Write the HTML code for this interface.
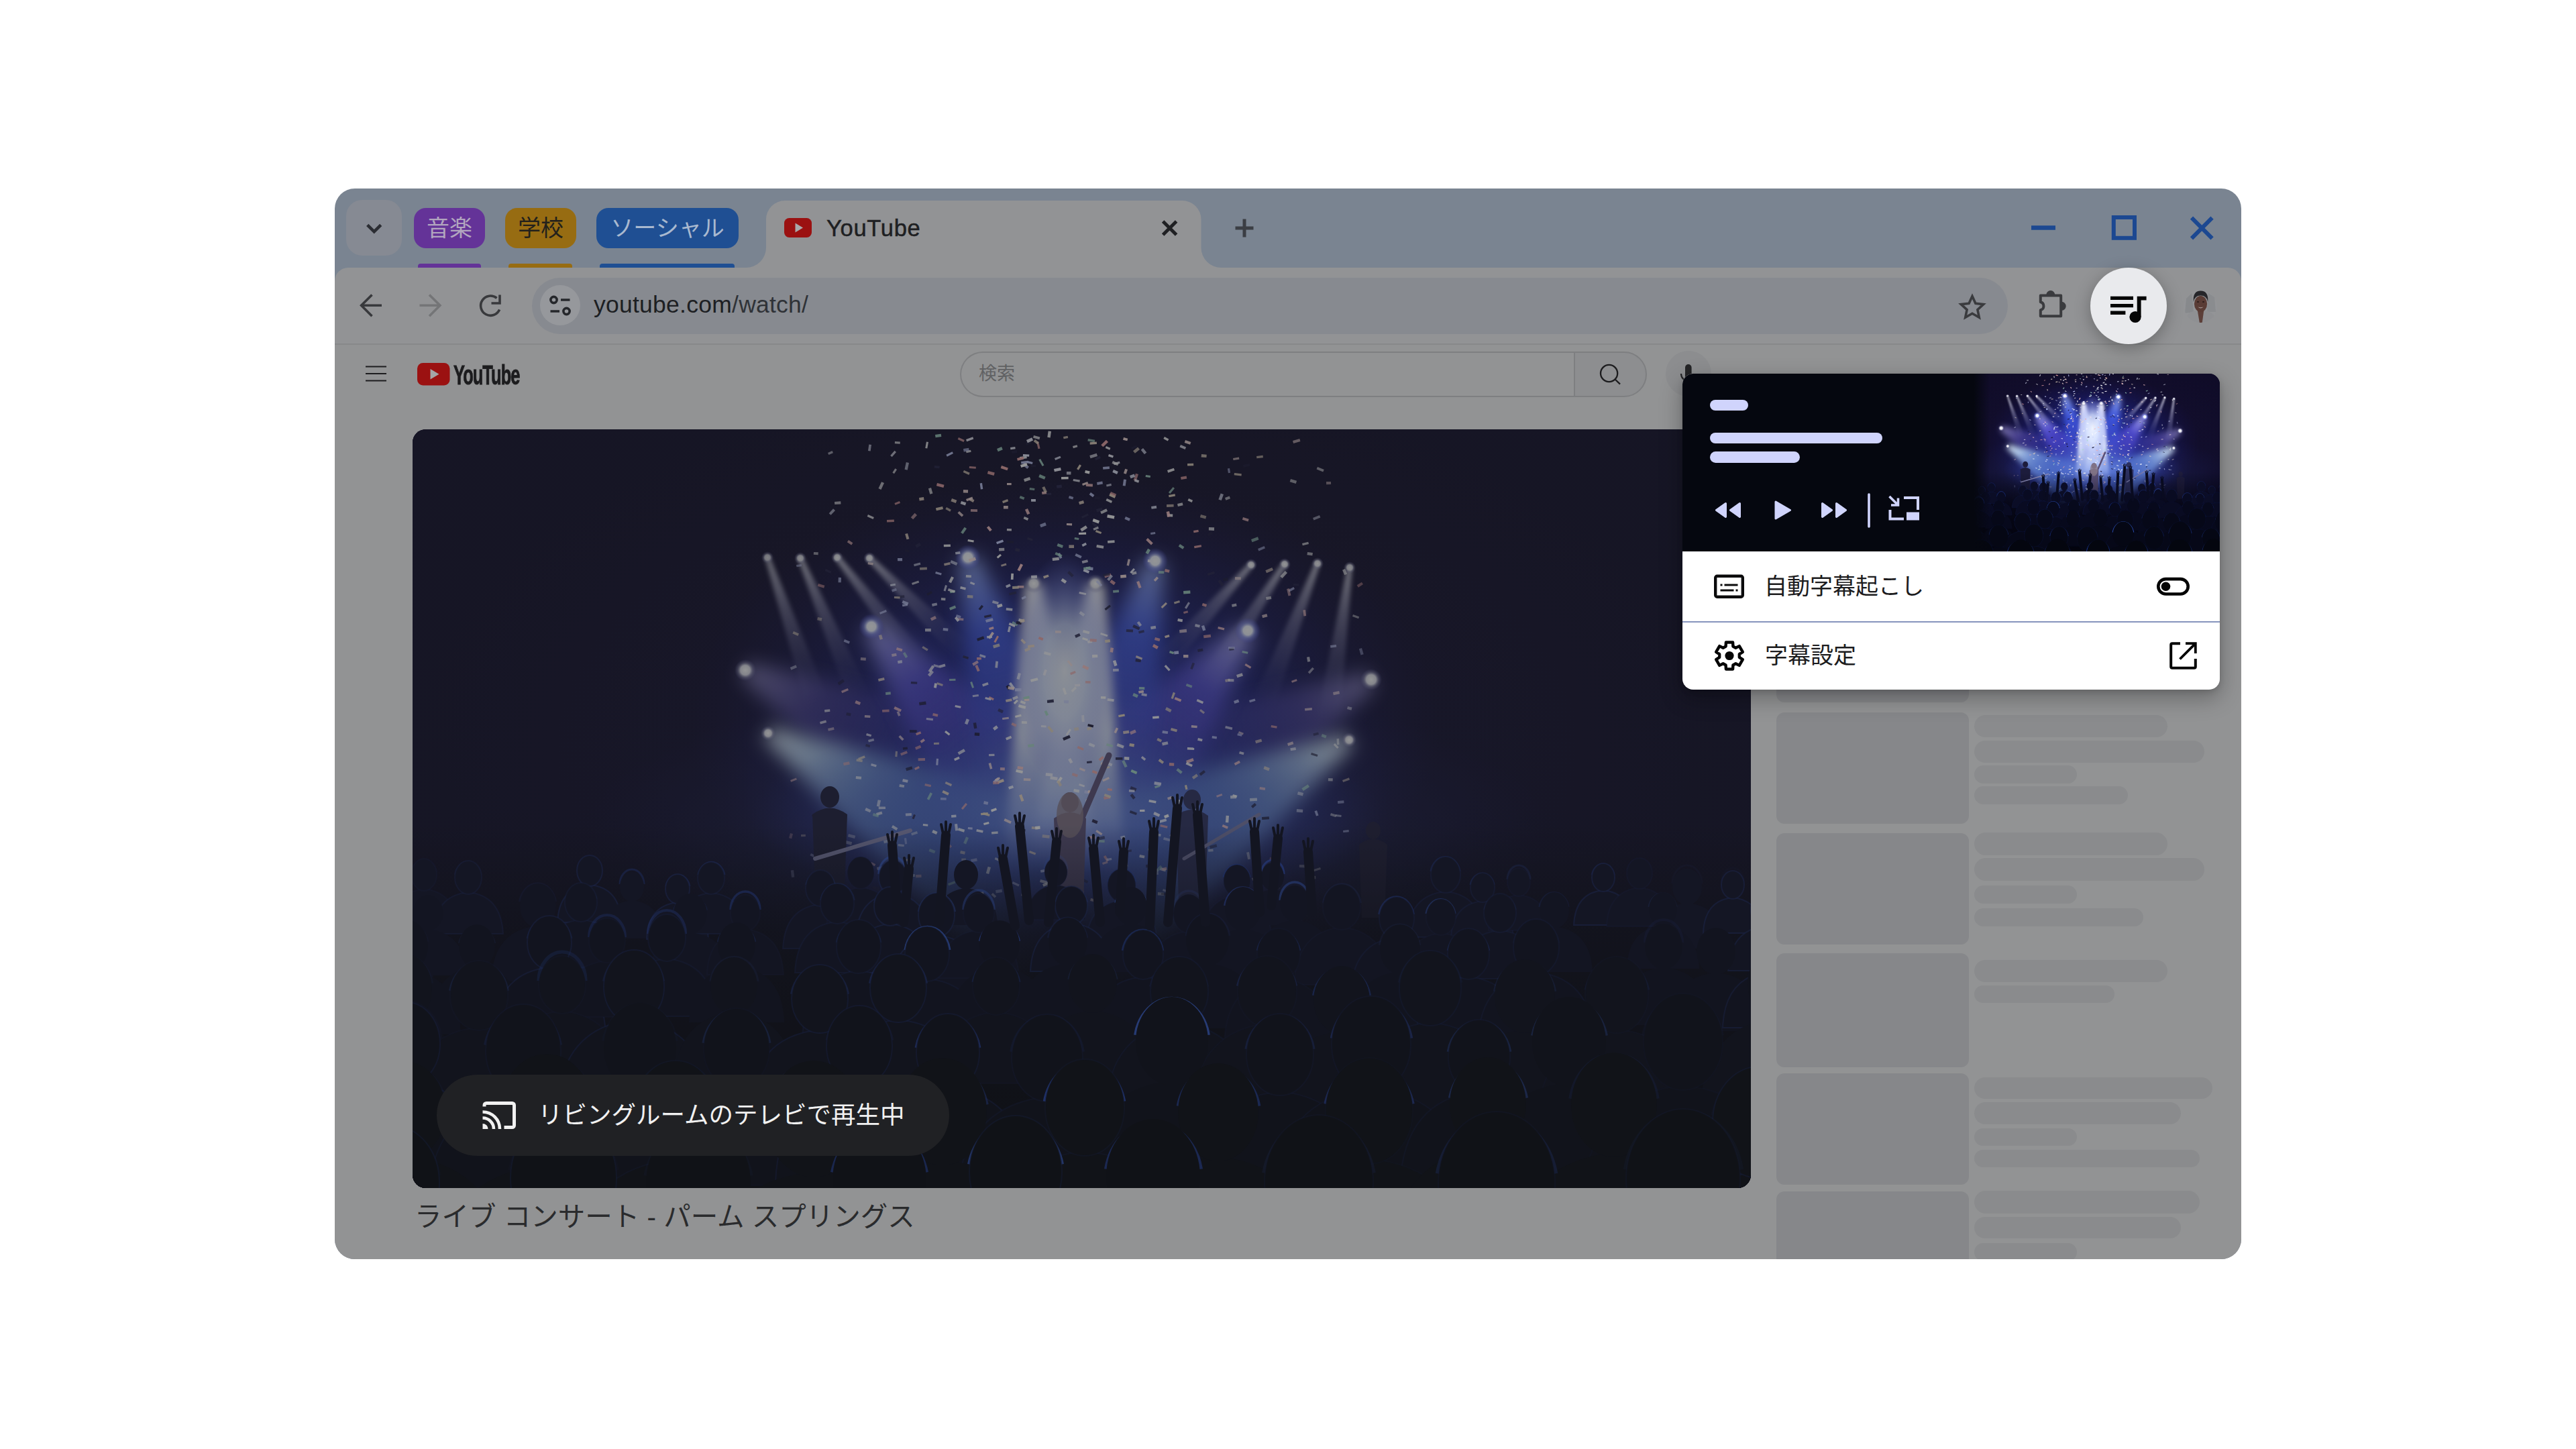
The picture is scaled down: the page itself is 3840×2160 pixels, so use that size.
<!DOCTYPE html>
<html lang="ja">
<head>
<meta charset="utf-8">
<title>YouTube</title>
<style>
*{box-sizing:border-box;margin:0;padding:0}
html,body{width:3840px;height:2160px;overflow:hidden;background:#fff}
body{position:relative;font-family:"Liberation Sans","Noto Sans CJK JP",sans-serif;color:#1f2023}
.abs{position:absolute}
#win{position:absolute;left:499px;top:281px;width:2842px;height:1596px;border-radius:30px;background:#7a8491;overflow:hidden}
/* coordinates inside #win are global minus (499,281) */
#win .g{position:absolute}
.chip{position:absolute;top:29px;height:60px;border-radius:18px;font-size:34px;line-height:60px;text-align:center;white-space:nowrap;font-family:"Liberation Sans","Noto Sans CJK JP",sans-serif}
.uline{position:absolute;top:112px;height:8px;border-radius:4px 4px 0 0}
#toolbar{position:absolute;left:0;top:118px;width:2842px;height:115px;background:#929395;border-radius:20px 20px 0 0;border-bottom:2px solid #87888a}
#content{position:absolute;left:0;top:233px;width:2842px;height:1363px;background:#929394}
#omni{position:absolute;left:294px;top:133px;width:2200px;height:84px;border-radius:42px;background:#878a90}
#siteinfo{position:absolute;left:306px;top:144px;width:60px;height:60px;border-radius:30px;background:#96989c}
#url{position:absolute;left:386px;top:130.5px;height:84px;line-height:84px;font-size:35.5px;letter-spacing:0.25px;color:#1d1f23;white-space:nowrap}
#url span{color:#2f3237}
#tabtitle{position:absolute;left:733px;top:24px;height:70px;line-height:70px;font-size:34.5px;letter-spacing:0.7px;-webkit-text-stroke:0.5px #1e1f22;color:#1e1f22;white-space:nowrap}
.sk{position:absolute;background:#8a8b8d;border-radius:17px}
.th{position:absolute;background:#86878a;border-radius:12px;left:2149px;width:287px}
#video{position:absolute;left:116px;top:359px;width:1995px;height:1131px;border-radius:20px;overflow:hidden;background:#13121d}
#video svg{position:absolute;left:0;top:0}
#scrim{position:absolute;left:0;top:0;width:100%;height:100%;background:rgba(32,33,36,0.48)}
#castpill{position:absolute;left:36px;top:962px;width:764px;height:121px;border-radius:61px;background:#202124}
#casttext{position:absolute;left:151px;top:1px;height:121px;line-height:119px;font-size:36.5px;color:#f1f1f1;white-space:nowrap;font-family:"Liberation Sans","Noto Sans CJK JP",sans-serif}
#vtitle{position:absolute;left:119px;top:1503px;height:60px;line-height:60px;font-size:40.5px;color:#2a2b2d;white-space:nowrap}
#ytsearch{position:absolute;left:932px;top:243px;width:916px;height:68px;border:2px solid #7e7f81;border-right:none;border-radius:34px 0 0 34px;background:#929394}
#ytsearchbtn{position:absolute;left:1847px;top:243px;width:109px;height:68px;border:2px solid #7e7f81;border-radius:0 34px 34px 0;background:#8d8e90}
#ytph{position:absolute;left:960px;top:243px;height:68px;line-height:66px;font-size:27px;color:#606163;white-space:nowrap}
#mic{position:absolute;left:1984px;top:242px;width:68px;height:68px;border-radius:34px;background:#8c8d8f}
#ytword{position:absolute;left:176.5px;top:255.5px;-webkit-text-stroke:1px #1c1c1e;height:44px;line-height:44px;font-size:41px;font-weight:bold;color:#1c1c1e;white-space:nowrap;transform-origin:0 50%;transform:scaleX(0.62);letter-spacing:-1.5px}
/* popup */
#mediabtn{position:absolute;left:3116px;top:399px;width:114px;height:114px;border-radius:57px;background:#e9eaed;box-shadow:0 6px 24px rgba(0,0,0,0.28)}
#popup{position:absolute;left:2508px;top:557px;width:801px;height:471px;border-radius:16px;background:#fff;overflow:hidden}
#popshadow{position:absolute;left:2508px;top:557px;width:801px;height:471px;border-radius:16px;box-shadow:0 12px 32px 2px rgba(0,0,0,0.27),0 3px 8px rgba(0,0,0,0.12)}
#pdark{position:absolute;left:0;top:0;width:801px;height:265px;background:#05070f}
.bar{position:absolute;background:#d0d4fc;border-radius:9px;left:41px}
.ptext{position:absolute;font-size:34px;color:#1c1c1e;white-space:nowrap;height:60px;line-height:60px;font-family:"Liberation Sans","Noto Sans CJK JP",sans-serif}
#pdiv{position:absolute;left:0;top:369px;width:801px;height:2px;background:#8694bd}
</style>
</head>
<body>
<svg width="0" height="0" style="position:absolute"><defs>
<linearGradient id="cbg" x1="0" y1="0" x2="0" y2="1"><stop offset="0" stop-color="#120d2b"/><stop offset="0.5" stop-color="#110e2c"/><stop offset="0.75" stop-color="#0a0b22"/><stop offset="1" stop-color="#04061a"/></linearGradient>
<radialGradient id="cglow" cx="0.5" cy="0.5" r="0.5" ><stop offset="0" stop-color="#2838c8" stop-opacity="0.85"/><stop offset="0.5" stop-color="#222ca8" stop-opacity="0.55"/><stop offset="0.8" stop-color="#1c1e7c" stop-opacity="0.22"/><stop offset="1" stop-color="#1a1660" stop-opacity="0"/></radialGradient>
<radialGradient id="chaze" cx="0.5" cy="0.5" r="0.5" ><stop offset="0" stop-color="#6c8ce0" stop-opacity="0.8"/><stop offset="0.5" stop-color="#4460c8" stop-opacity="0.5"/><stop offset="1" stop-color="#2c34a0" stop-opacity="0"/></radialGradient>
<radialGradient id="cwhite" cx="0.5" cy="0.5" r="0.5" ><stop offset="0" stop-color="#f4f8ff" stop-opacity="1"/><stop offset="0.4" stop-color="#d4e0ff" stop-opacity="0.85"/><stop offset="0.75" stop-color="#8f9cf0" stop-opacity="0.4"/><stop offset="1" stop-color="#6a70e0" stop-opacity="0"/></radialGradient>
<radialGradient id="clight" cx="0.5" cy="0.5" r="0.5" ><stop offset="0" stop-color="#ffffff" stop-opacity="1"/><stop offset="0.35" stop-color="#f0f4ff" stop-opacity="1"/><stop offset="0.6" stop-color="#9aa6ff" stop-opacity="0.55"/><stop offset="1" stop-color="#5a60ff" stop-opacity="0"/></radialGradient>
<radialGradient id="clightw" cx="0.5" cy="0.5" r="0.5" ><stop offset="0" stop-color="#ffffff" stop-opacity="1"/><stop offset="0.45" stop-color="#e8e8f0" stop-opacity="0.95"/><stop offset="0.7" stop-color="#b0b0d0" stop-opacity="0.4"/><stop offset="1" stop-color="#8080c0" stop-opacity="0"/></radialGradient>
<linearGradient id="bw" x1="0" y1="0" x2="0" y2="1"><stop offset="0" stop-color="#f4f4ff" stop-opacity="0.8"/><stop offset="0.35" stop-color="#d0d0f0" stop-opacity="0.45"/><stop offset="0.75" stop-color="#a8a8e0" stop-opacity="0.14"/><stop offset="1" stop-color="#a0a0e0" stop-opacity="0"/></linearGradient>
<linearGradient id="bb" x1="0" y1="0" x2="0" y2="1"><stop offset="0" stop-color="#a0b8ff" stop-opacity="1"/><stop offset="0.25" stop-color="#4460f0" stop-opacity="0.85"/><stop offset="0.6" stop-color="#2c3cd0" stop-opacity="0.5"/><stop offset="1" stop-color="#2028a8" stop-opacity="0"/></linearGradient>
<linearGradient id="bm" x1="0" y1="0" x2="0" y2="1"><stop offset="0" stop-color="#b0b0ff" stop-opacity="0.95"/><stop offset="0.25" stop-color="#6058e8" stop-opacity="0.75"/><stop offset="0.6" stop-color="#4a3cc8" stop-opacity="0.4"/><stop offset="1" stop-color="#3a2ca0" stop-opacity="0"/></linearGradient>
<linearGradient id="bc" x1="0" y1="0" x2="0" y2="1"><stop offset="0" stop-color="#e8f6ff" stop-opacity="1"/><stop offset="0.3" stop-color="#96c6f6" stop-opacity="0.78"/><stop offset="0.65" stop-color="#5a90e0" stop-opacity="0.42"/><stop offset="1" stop-color="#4670d0" stop-opacity="0"/></linearGradient>
<linearGradient id="bcw" x1="0" y1="0" x2="0" y2="1"><stop offset="0" stop-color="#ffffff" stop-opacity="1"/><stop offset="0.5" stop-color="#eaf2ff" stop-opacity="0.95"/><stop offset="0.8" stop-color="#b0c4f8" stop-opacity="0.5"/><stop offset="1" stop-color="#7080e0" stop-opacity="0"/></linearGradient>
<linearGradient id="bp" x1="0" y1="0" x2="0" y2="1"><stop offset="0" stop-color="#c0b8f8" stop-opacity="0.7"/><stop offset="0.3" stop-color="#7868d8" stop-opacity="0.45"/><stop offset="0.7" stop-color="#5040b0" stop-opacity="0.2"/><stop offset="1" stop-color="#4030a0" stop-opacity="0"/></linearGradient>
<linearGradient id="cfade" x1="0" y1="0" x2="0" y2="1"><stop offset="0" stop-color="#03040e" stop-opacity="0"/><stop offset="0.3" stop-color="#03040e" stop-opacity="0.6"/><stop offset="0.7" stop-color="#02030c" stop-opacity="0.9"/><stop offset="1" stop-color="#02030a" stop-opacity="0.96"/></linearGradient>
<radialGradient id="cvig" cx="0.5" cy="0.5" r="0.5" gradientTransform="translate(-0.01 -0.08)"><stop offset="0.6" stop-color="#0e0b26" stop-opacity="0"/><stop offset="1" stop-color="#0e0b26" stop-opacity="0.8"/></radialGradient>
<filter id="b3" x="-30%" y="-10%" width="160%" height="120%"><feGaussianBlur stdDeviation="3"/></filter>
<filter id="b8" x="-30%" y="-10%" width="160%" height="120%"><feGaussianBlur stdDeviation="8"/></filter>
<filter id="b14" x="-30%" y="-10%" width="160%" height="120%"><feGaussianBlur stdDeviation="14"/></filter>
<g id="concert">
<rect width="1995" height="1131" fill="url(#cbg)"/>
<ellipse cx="972" cy="440" rx="560" ry="370" fill="url(#cglow)"/>
<g transform="translate(496 359) rotate(-62)" opacity="0.9"><polygon points="-12.0,0 12.0,0 115.0,380 -115.0,380" fill="url(#bp)" filter="url(#b14)"/></g>
<g transform="translate(1429 373) rotate(62)" opacity="0.9"><polygon points="-12.0,0 12.0,0 115.0,380 -115.0,380" fill="url(#bp)" filter="url(#b14)"/></g>
<g transform="translate(684 294) rotate(-39)" opacity="0.95"><polygon points="-13.0,0 13.0,0 125.0,430 -125.0,430" fill="url(#bm)" filter="url(#b14)"/></g>
<g transform="translate(1245 300) rotate(39)" opacity="0.95"><polygon points="-13.0,0 13.0,0 125.0,430 -125.0,430" fill="url(#bm)" filter="url(#b14)"/></g>
<g transform="translate(828 191) rotate(-16)" opacity="0.95"><polygon points="-13.0,0 13.0,0 105.0,440 -105.0,440" fill="url(#bb)" filter="url(#b14)"/></g>
<g transform="translate(1107 196) rotate(14)" opacity="0.95"><polygon points="-13.0,0 13.0,0 105.0,440 -105.0,440" fill="url(#bb)" filter="url(#b14)"/></g>
<g transform="translate(530 453) rotate(-60)" opacity="1"><polygon points="-10.0,0 10.0,0 150.0,520 -150.0,520" fill="url(#bc)" filter="url(#b14)"/></g>
<g transform="translate(1396 463) rotate(60)" opacity="1"><polygon points="-10.0,0 10.0,0 150.0,520 -150.0,520" fill="url(#bc)" filter="url(#b14)"/></g>
<ellipse cx="975" cy="600" rx="720" ry="230" fill="url(#chaze)" opacity="0.32"/>
<ellipse cx="975" cy="575" rx="470" ry="150" fill="url(#chaze)"/>
<g transform="translate(926 230) rotate(-4)" opacity="1"><polygon points="-13.0,0 13.0,0 75.0,430 -75.0,430" fill="url(#bcw)" filter="url(#b8)"/></g>
<g transform="translate(1018 230) rotate(4)" opacity="1"><polygon points="-13.0,0 13.0,0 75.0,430 -75.0,430" fill="url(#bcw)" filter="url(#b8)"/></g>
<ellipse cx="972" cy="360" rx="78" ry="175" fill="url(#cwhite)" opacity="1"/><ellipse cx="972" cy="460" rx="210" ry="210" fill="url(#cwhite)" opacity="0.14"/>
<g transform="translate(529 191) rotate(-19)" opacity="0.9"><polygon points="-4.0,0 4.0,0 17.0,230 -17.0,230" fill="url(#bw)" filter="url(#b3)"/></g>
<g transform="translate(578 192) rotate(-23)" opacity="0.9"><polygon points="-4.0,0 4.0,0 17.0,225 -17.0,225" fill="url(#bw)" filter="url(#b3)"/></g>
<g transform="translate(633 191) rotate(-38)" opacity="0.9"><polygon points="-4.0,0 4.0,0 17.0,220 -17.0,220" fill="url(#bw)" filter="url(#b3)"/></g>
<g transform="translate(681 192) rotate(-45)" opacity="0.9"><polygon points="-4.0,0 4.0,0 17.0,200 -17.0,200" fill="url(#bw)" filter="url(#b3)"/></g>
<g transform="translate(1397 206) rotate(8)" opacity="0.9"><polygon points="-4.0,0 4.0,0 17.0,230 -17.0,230" fill="url(#bw)" filter="url(#b3)"/></g>
<g transform="translate(1349 200) rotate(21)" opacity="0.9"><polygon points="-4.0,0 4.0,0 17.0,225 -17.0,225" fill="url(#bw)" filter="url(#b3)"/></g>
<g transform="translate(1300 201) rotate(33)" opacity="0.9"><polygon points="-4.0,0 4.0,0 17.0,220 -17.0,220" fill="url(#bw)" filter="url(#b3)"/></g>
<g transform="translate(1250 202) rotate(42)" opacity="0.9"><polygon points="-4.0,0 4.0,0 17.0,200 -17.0,200" fill="url(#bw)" filter="url(#b3)"/></g>
<circle cx="529" cy="191" r="9" fill="url(#clightw)"/>
<circle cx="578" cy="192" r="9" fill="url(#clightw)"/>
<circle cx="633" cy="191" r="9" fill="url(#clightw)"/>
<circle cx="681" cy="192" r="9" fill="url(#clightw)"/>
<circle cx="1250" cy="202" r="9" fill="url(#clightw)"/>
<circle cx="1300" cy="201" r="9" fill="url(#clightw)"/>
<circle cx="1349" cy="200" r="9" fill="url(#clightw)"/>
<circle cx="1397" cy="206" r="9" fill="url(#clightw)"/>
<circle cx="828" cy="191" r="19" fill="url(#clight)"/>
<circle cx="1107" cy="196" r="19" fill="url(#clight)"/>
<circle cx="684" cy="294" r="19" fill="url(#clight)"/>
<circle cx="1245" cy="300" r="19" fill="url(#clight)"/>
<circle cx="926" cy="230" r="14" fill="url(#clightw)"/>
<circle cx="1018" cy="230" r="14" fill="url(#clightw)"/>
<circle cx="496" cy="359" r="16" fill="url(#clightw)"/>
<circle cx="1429" cy="373" r="16" fill="url(#clightw)"/>
<circle cx="530" cy="453" r="11" fill="url(#clightw)"/>
<circle cx="1396" cy="463" r="11" fill="url(#clightw)"/>
<rect width="1995" height="1131" fill="url(#cvig)"/>
<g><rect x="785" y="352" width="8.8" height="3.9" fill="#f4f4ff" opacity="0.74" transform="rotate(-16 785 352)"/><rect x="630" y="121" width="9.4" height="4.0" fill="#e8ecff" opacity="0.64" transform="rotate(133 630 121)"/><rect x="828" y="593" width="6.8" height="3.1" fill="#c8d0ff" opacity="0.82" transform="rotate(5 828 593)"/><rect x="987" y="161" width="6.5" height="3.1" fill="#a8dcc8" opacity="0.78" transform="rotate(8 987 161)"/><rect x="1198" y="546" width="8.8" height="3.0" fill="#ffc8c8" opacity="0.61" transform="rotate(-20 1198 546)"/><rect x="933" y="18" width="10.7" height="3.1" fill="#f0a8a8" opacity="0.76" transform="rotate(76 933 18)"/><rect x="807" y="491" width="8.0" height="3.5" fill="#ffffff" opacity="0.84" transform="rotate(-24 807 491)"/><rect x="814" y="12" width="9.6" height="3.3" fill="#f0a8a8" opacity="0.75" transform="rotate(24 814 12)"/><rect x="1026" y="303" width="11.0" height="3.0" fill="#ffffff" opacity="0.76" transform="rotate(18 1026 303)"/><rect x="646" y="697" width="6.7" height="3.2" fill="#ffc8c8" opacity="0.32" transform="rotate(-25 646 697)"/><rect x="849" y="80" width="9.1" height="3.4" fill="#c8d0ff" opacity="0.91" transform="rotate(82 849 80)"/><rect x="796" y="116" width="7.9" height="3.4" fill="#e8d8c0" opacity="0.69" transform="rotate(29 796 116)"/><rect x="1251" y="669" width="10.5" height="4.0" fill="#ffffff" opacity="0.45" transform="rotate(-20 1251 669)"/><rect x="568" y="301" width="8.7" height="3.8" fill="#e8d8c0" opacity="0.58" transform="rotate(24 568 301)"/><rect x="1230" y="453" width="6.8" height="3.3" fill="#c8d0ff" opacity="0.63" transform="rotate(12 1230 453)"/><rect x="936" y="44" width="10.9" height="3.1" fill="#a8dcc8" opacity="0.86" transform="rotate(60 936 44)"/><rect x="1337" y="666" width="9.2" height="4.5" fill="#ffffff" opacity="0.35" transform="rotate(-1 1337 666)"/><rect x="1093" y="68" width="7.1" height="3.1" fill="#a8dcc8" opacity="0.88" transform="rotate(8 1093 68)"/><rect x="1070" y="568" width="10.6" height="3.6" fill="#1a1838" opacity="0.70" transform="rotate(20 1070 568)"/><rect x="1310" y="375" width="8.2" height="3.0" fill="#ffc8c8" opacity="0.67" transform="rotate(-20 1310 375)"/><rect x="1000" y="299" width="9.8" height="3.9" fill="#ffffff" opacity="0.79" transform="rotate(15 1000 299)"/><rect x="1362" y="78" width="7.0" height="4.2" fill="#ffe4e0" opacity="0.50" transform="rotate(-1 1362 78)"/><rect x="1059" y="450" width="8.8" height="4.2" fill="#f0dcc8" opacity="0.82" transform="rotate(-8 1059 450)"/><rect x="747" y="201" width="9.9" height="3.3" fill="#e8ecff" opacity="0.63" transform="rotate(-14 747 201)"/><rect x="696" y="273" width="10.5" height="3.1" fill="#c8d0ff" opacity="0.67" transform="rotate(-22 696 273)"/><rect x="1115" y="653" width="8.8" height="4.1" fill="#f4f4ff" opacity="0.61" transform="rotate(17 1115 653)"/><rect x="807" y="221" width="9.2" height="4.1" fill="#ffffff" opacity="0.82" transform="rotate(117 807 221)"/><rect x="1107" y="310" width="7.7" height="4.2" fill="#f0a8a8" opacity="0.82" transform="rotate(15 1107 310)"/><rect x="1375" y="468" width="8.2" height="3.1" fill="#ffffff" opacity="0.60" transform="rotate(46 1375 468)"/><rect x="1137" y="399" width="10.0" height="3.9" fill="#ffc8c8" opacity="0.88" transform="rotate(22 1137 399)"/><rect x="1014" y="508" width="7.5" height="3.7" fill="#f0a8a8" opacity="0.97" transform="rotate(20 1014 508)"/><rect x="779" y="8" width="8.8" height="4.3" fill="#a8dcc8" opacity="0.85" transform="rotate(-8 779 8)"/><rect x="847" y="572" width="10.7" height="3.2" fill="#e8d8c0" opacity="0.95" transform="rotate(-5 847 572)"/><rect x="936" y="657" width="6.6" height="3.8" fill="#c8d0ff" opacity="0.74" transform="rotate(-8 936 657)"/><rect x="1260" y="178" width="10.4" height="3.7" fill="#c8d0ff" opacity="0.58" transform="rotate(-23 1260 178)"/><rect x="898" y="386" width="9.6" height="4.5" fill="#c8d0ff" opacity="0.86" transform="rotate(-0 898 386)"/><rect x="605" y="230" width="9.8" height="4.0" fill="#f0a8a8" opacity="0.56" transform="rotate(17 605 230)"/><rect x="1131" y="602" width="10.3" height="4.5" fill="#f4f4ff" opacity="0.53" transform="rotate(36 1131 602)"/><rect x="873" y="445" width="6.6" height="4.6" fill="#f4f4ff" opacity="0.84" transform="rotate(144 873 445)"/><rect x="1270" y="502" width="8.4" height="4.5" fill="#f0dcc8" opacity="0.64" transform="rotate(21 1270 502)"/><rect x="1113" y="583" width="10.6" height="3.8" fill="#e8ecff" opacity="0.86" transform="rotate(-15 1113 583)"/><rect x="1146" y="686" width="6.6" height="3.5" fill="#a8dcc8" opacity="0.53" transform="rotate(-13 1146 686)"/><rect x="1009" y="606" width="9.3" height="4.1" fill="#ffc8c8" opacity="0.72" transform="rotate(4 1009 606)"/><rect x="860" y="398" width="7.5" height="3.3" fill="#f0a8a8" opacity="0.92" transform="rotate(25 860 398)"/><rect x="869" y="638" width="10.7" height="3.3" fill="#e8ecff" opacity="0.63" transform="rotate(25 869 638)"/><rect x="1122" y="208" width="6.9" height="4.3" fill="#f0a8a8" opacity="0.84" transform="rotate(14 1122 208)"/><rect x="1037" y="19" width="10.6" height="4.5" fill="#f0a8a8" opacity="0.95" transform="rotate(136 1037 19)"/><rect x="1376" y="574" width="8.7" height="3.0" fill="#e8ecff" opacity="0.49" transform="rotate(6 1376 574)"/><rect x="1017" y="100" width="7.8" height="4.1" fill="#1a1838" opacity="0.73" transform="rotate(4 1017 100)"/><rect x="1082" y="301" width="8.4" height="3.6" fill="#26244a" opacity="0.74" transform="rotate(-14 1082 301)"/><rect x="841" y="312" width="10.6" height="4.0" fill="#1a1838" opacity="0.91" transform="rotate(-20 841 312)"/><rect x="1188" y="621" width="10.6" height="4.5" fill="#1a1838" opacity="0.52" transform="rotate(-15 1188 621)"/><rect x="1208" y="222" width="7.2" height="4.5" fill="#1a1838" opacity="0.69" transform="rotate(-9 1208 222)"/><rect x="1164" y="151" width="7.4" height="3.3" fill="#f0a8a8" opacity="0.86" transform="rotate(-10 1164 151)"/><rect x="917" y="47" width="7.8" height="3.3" fill="#c8d0ff" opacity="0.89" transform="rotate(14 917 47)"/><rect x="1030" y="548" width="9.3" height="4.2" fill="#f0a8a8" opacity="0.81" transform="rotate(-12 1030 548)"/><rect x="968" y="87" width="7.6" height="4.4" fill="#26244a" opacity="1.00" transform="rotate(174 968 87)"/><rect x="1009" y="467" width="9.2" height="4.2" fill="#e8ecff" opacity="0.96" transform="rotate(22 1009 467)"/><rect x="884" y="403" width="9.2" height="3.7" fill="#f0dcc8" opacity="0.86" transform="rotate(-11 884 403)"/><rect x="907" y="364" width="9.5" height="4.2" fill="#e8ecff" opacity="0.82" transform="rotate(105 907 364)"/><rect x="912" y="50" width="9.1" height="4.2" fill="#c8d0ff" opacity="0.78" transform="rotate(40 912 50)"/><rect x="1223" y="544" width="6.7" height="3.2" fill="#ffffff" opacity="0.75" transform="rotate(16 1223 544)"/><rect x="907" y="48" width="10.4" height="3.6" fill="#c8d0ff" opacity="0.88" transform="rotate(-7 907 48)"/><rect x="1035" y="468" width="9.6" height="3.6" fill="#a8dcc8" opacity="0.74" transform="rotate(16 1035 468)"/><rect x="777" y="362" width="8.8" height="4.4" fill="#ffffff" opacity="0.67" transform="rotate(131 777 362)"/><rect x="969" y="222" width="7.6" height="4.5" fill="#ffffff" opacity="0.89" transform="rotate(35 969 222)"/><rect x="970" y="11" width="6.7" height="3.4" fill="#e8d8c0" opacity="0.77" transform="rotate(-11 970 11)"/><rect x="1044" y="688" width="8.7" height="3.6" fill="#1a1838" opacity="0.53" transform="rotate(-8 1044 688)"/><rect x="630" y="579" width="7.5" height="3.7" fill="#26244a" opacity="0.72" transform="rotate(66 630 579)"/><rect x="731" y="255" width="9.0" height="4.2" fill="#c8d0ff" opacity="0.80" transform="rotate(21 731 255)"/><rect x="1145" y="71" width="8.7" height="4.1" fill="#f0a8a8" opacity="0.80" transform="rotate(-10 1145 71)"/><rect x="1141" y="505" width="8.7" height="4.2" fill="#a8dcc8" opacity="0.73" transform="rotate(39 1141 505)"/><rect x="832" y="641" width="9.2" height="4.4" fill="#c8d0ff" opacity="0.51" transform="rotate(-11 832 641)"/><rect x="1179" y="307" width="10.7" height="4.4" fill="#f0a8a8" opacity="0.71" transform="rotate(-7 1179 307)"/><rect x="1064" y="298" width="10.1" height="3.9" fill="#26244a" opacity="0.78" transform="rotate(3 1064 298)"/><rect x="1145" y="23" width="8.8" height="3.9" fill="#f4f4ff" opacity="0.79" transform="rotate(23 1145 23)"/><rect x="801" y="241" width="7.7" height="3.2" fill="#a8dcc8" opacity="0.86" transform="rotate(-9 801 241)"/><rect x="917" y="322" width="9.7" height="3.8" fill="#f0dcc8" opacity="0.94" transform="rotate(-8 917 322)"/><rect x="1125" y="260" width="10.1" height="3.1" fill="#f0dcc8" opacity="0.89" transform="rotate(136 1125 260)"/><rect x="1217" y="576" width="10.3" height="4.4" fill="#ffffff" opacity="0.78" transform="rotate(94 1217 576)"/><rect x="865" y="322" width="9.8" height="4.6" fill="#e8d8c0" opacity="0.77" transform="rotate(-17 865 322)"/><rect x="1054" y="681" width="6.8" height="3.5" fill="#ffffff" opacity="0.66" transform="rotate(-19 1054 681)"/><rect x="719" y="18" width="7.9" height="3.3" fill="#ffffff" opacity="0.70" transform="rotate(4 719 18)"/><rect x="1019" y="336" width="10.5" height="3.6" fill="#c8d0ff" opacity="0.96" transform="rotate(113 1019 336)"/><rect x="1340" y="482" width="10.0" height="3.1" fill="#1a1838" opacity="0.65" transform="rotate(18 1340 482)"/><rect x="1119" y="685" width="10.0" height="3.1" fill="#c8d0ff" opacity="0.60" transform="rotate(20 1119 685)"/><rect x="1052" y="446" width="7.9" height="3.4" fill="#ffe4e0" opacity="0.85" transform="rotate(115 1052 446)"/><rect x="1045" y="50" width="9.1" height="3.3" fill="#f4f4ff" opacity="0.81" transform="rotate(-15 1045 50)"/><rect x="876" y="504" width="6.9" height="4.2" fill="#ffc8c8" opacity="0.75" transform="rotate(2 876 504)"/><rect x="1027" y="496" width="6.7" height="3.7" fill="#ffe4e0" opacity="0.82" transform="rotate(22 1027 496)"/><rect x="719" y="413" width="11.0" height="4.1" fill="#ffc8c8" opacity="0.74" transform="rotate(25 719 413)"/><rect x="1002" y="538" width="8.5" height="4.4" fill="#c8d0ff" opacity="0.93" transform="rotate(11 1002 538)"/><rect x="829" y="609" width="10.3" height="4.2" fill="#a8dcc8" opacity="0.51" transform="rotate(113 829 609)"/><rect x="738" y="263" width="7.7" height="3.3" fill="#c8d0ff" opacity="0.77" transform="rotate(170 738 263)"/><rect x="1159" y="259" width="10.2" height="3.1" fill="#e8ecff" opacity="0.67" transform="rotate(122 1159 259)"/><rect x="1121" y="308" width="6.9" height="3.4" fill="#f0dcc8" opacity="0.91" transform="rotate(-17 1121 308)"/><rect x="722" y="325" width="8.8" height="4.0" fill="#ffc8c8" opacity="0.73" transform="rotate(16 722 325)"/><rect x="795" y="525" width="10.0" height="3.4" fill="#f0dcc8" opacity="0.72" transform="rotate(24 795 525)"/><rect x="846" y="335" width="9.0" height="3.3" fill="#e8ecff" opacity="0.75" transform="rotate(18 846 335)"/><rect x="920" y="401" width="9.3" height="3.8" fill="#a8dcc8" opacity="0.95" transform="rotate(168 920 401)"/><rect x="1096" y="162" width="10.8" height="4.0" fill="#ffc8c8" opacity="0.88" transform="rotate(44 1096 162)"/><rect x="1144" y="258" width="8.6" height="3.2" fill="#e8d8c0" opacity="0.79" transform="rotate(163 1144 258)"/><rect x="874" y="416" width="7.7" height="4.5" fill="#26244a" opacity="0.69" transform="rotate(25 874 416)"/><rect x="684" y="498" width="8.1" height="3.3" fill="#e8ecff" opacity="0.73" transform="rotate(16 684 498)"/><rect x="1354" y="656" width="11.0" height="3.2" fill="#ffffff" opacity="0.34" transform="rotate(163 1354 656)"/><rect x="1125" y="549" width="6.6" height="3.8" fill="#ffe4e0" opacity="0.72" transform="rotate(-19 1125 549)"/><rect x="1232" y="657" width="6.7" height="4.3" fill="#ffffff" opacity="0.37" transform="rotate(14 1232 657)"/><rect x="1331" y="269" width="9.0" height="3.7" fill="#ffc8c8" opacity="0.66" transform="rotate(83 1331 269)"/><rect x="755" y="102" width="7.0" height="4.5" fill="#f0dcc8" opacity="0.83" transform="rotate(-8 755 102)"/><rect x="817" y="234" width="8.2" height="3.5" fill="#f4f4ff" opacity="0.88" transform="rotate(14 817 234)"/><rect x="840" y="195" width="10.4" height="4.6" fill="#ffe4e0" opacity="0.86" transform="rotate(164 840 195)"/><rect x="724" y="618" width="9.0" height="3.3" fill="#f4f4ff" opacity="0.45" transform="rotate(7 724 618)"/><rect x="1124" y="112" width="10.5" height="3.9" fill="#f0dcc8" opacity="0.70" transform="rotate(-2 1124 112)"/><rect x="714" y="335" width="7.1" height="4.1" fill="#ffe4e0" opacity="0.65" transform="rotate(-10 714 335)"/><rect x="1036" y="122" width="10.0" height="4.2" fill="#ffffff" opacity="0.76" transform="rotate(155 1036 122)"/><rect x="776" y="597" width="7.3" height="4.4" fill="#ffffff" opacity="0.79" transform="rotate(25 776 597)"/><rect x="1149" y="241" width="10.2" height="4.5" fill="#a8dcc8" opacity="0.89" transform="rotate(-4 1149 241)"/><rect x="827" y="559" width="10.4" height="3.2" fill="#f0a8a8" opacity="0.74" transform="rotate(130 827 559)"/><rect x="1031" y="218" width="10.1" height="3.8" fill="#f0a8a8" opacity="0.77" transform="rotate(-19 1031 218)"/><rect x="881" y="114" width="6.8" height="4.5" fill="#ffe4e0" opacity="0.86" transform="rotate(1 881 114)"/><rect x="761" y="323" width="9.1" height="3.3" fill="#e8d8c0" opacity="0.61" transform="rotate(32 761 323)"/><rect x="1318" y="566" width="9.3" height="4.5" fill="#e8ecff" opacity="0.51" transform="rotate(4 1318 566)"/><rect x="825" y="643" width="6.6" height="3.5" fill="#e8d8c0" opacity="0.48" transform="rotate(177 825 643)"/><rect x="1258" y="560" width="7.2" height="4.0" fill="#1a1838" opacity="0.72" transform="rotate(139 1258 560)"/><rect x="616" y="208" width="9.2" height="3.4" fill="#26244a" opacity="0.68" transform="rotate(24 616 208)"/><rect x="865" y="255" width="9.2" height="4.0" fill="#f4f4ff" opacity="0.72" transform="rotate(15 865 255)"/><rect x="826" y="148" width="9.7" height="4.0" fill="#a8dcc8" opacity="0.80" transform="rotate(125 826 148)"/><rect x="780" y="212" width="9.1" height="3.1" fill="#c8d0ff" opacity="0.80" transform="rotate(16 780 212)"/><rect x="995" y="593" width="8.3" height="3.6" fill="#1a1838" opacity="0.93" transform="rotate(24 995 593)"/><rect x="865" y="691" width="7.2" height="3.7" fill="#e8ecff" opacity="0.50" transform="rotate(43 865 691)"/><rect x="1098" y="682" width="9.6" height="4.1" fill="#e8d8c0" opacity="0.63" transform="rotate(24 1098 682)"/><rect x="1105" y="320" width="7.9" height="4.5" fill="#f0a8a8" opacity="0.95" transform="rotate(29 1105 320)"/><rect x="1071" y="532" width="9.1" height="4.5" fill="#26244a" opacity="0.76" transform="rotate(21 1071 532)"/><rect x="1180" y="292" width="7.6" height="4.3" fill="#c8d0ff" opacity="0.81" transform="rotate(72 1180 292)"/><rect x="1044" y="357" width="8.7" height="4.0" fill="#f4f4ff" opacity="0.71" transform="rotate(-1 1044 357)"/><rect x="1226" y="220" width="8.8" height="4.2" fill="#ffe4e0" opacity="0.60" transform="rotate(1 1226 220)"/><rect x="906" y="53" width="9.8" height="4.2" fill="#ffffff" opacity="1.00" transform="rotate(-18 906 53)"/><rect x="1100" y="294" width="7.7" height="4.4" fill="#ffffff" opacity="0.72" transform="rotate(-10 1100 294)"/><rect x="1083" y="384" width="8.3" height="3.8" fill="#a8dcc8" opacity="0.82" transform="rotate(1 1083 384)"/><rect x="1075" y="291" width="10.5" height="4.3" fill="#26244a" opacity="0.80" transform="rotate(25 1075 291)"/><rect x="821" y="90" width="7.1" height="4.4" fill="#ffe4e0" opacity="0.84" transform="rotate(2 821 90)"/><rect x="1125" y="61" width="10.3" height="3.9" fill="#ffffff" opacity="0.87" transform="rotate(-19 1125 61)"/><rect x="1001" y="208" width="8.7" height="3.8" fill="#e8ecff" opacity="0.98" transform="rotate(22 1001 208)"/><rect x="886" y="166" width="10.0" height="3.6" fill="#1a1838" opacity="0.75" transform="rotate(1 886 166)"/><rect x="879" y="430" width="9.7" height="3.0" fill="#ffe4e0" opacity="0.71" transform="rotate(-7 879 430)"/><rect x="694" y="372" width="9.1" height="3.8" fill="#f0dcc8" opacity="0.77" transform="rotate(-12 694 372)"/><rect x="945" y="419" width="7.3" height="3.8" fill="#a8dcc8" opacity="0.98" transform="rotate(65 945 419)"/><rect x="1379" y="554" width="9.3" height="4.0" fill="#c8d0ff" opacity="0.53" transform="rotate(-4 1379 554)"/><rect x="1128" y="643" width="8.8" height="3.5" fill="#ffe4e0" opacity="0.48" transform="rotate(-7 1128 643)"/><rect x="1005" y="495" width="7.6" height="3.0" fill="#26244a" opacity="0.90" transform="rotate(-5 1005 495)"/><rect x="755" y="407" width="10.2" height="4.6" fill="#1a1838" opacity="0.79" transform="rotate(-8 755 407)"/><rect x="735" y="505" width="9.6" height="4.5" fill="#1a1838" opacity="0.73" transform="rotate(-17 735 505)"/><rect x="895" y="286" width="8.9" height="3.4" fill="#a8dcc8" opacity="0.74" transform="rotate(32 895 286)"/><rect x="1218" y="58" width="6.8" height="3.2" fill="#c8d0ff" opacity="0.59" transform="rotate(81 1218 58)"/><rect x="727" y="456" width="8.1" height="3.6" fill="#ffe4e0" opacity="0.67" transform="rotate(46 727 456)"/><rect x="1128" y="497" width="7.3" height="4.4" fill="#f0a8a8" opacity="0.85" transform="rotate(3 1128 497)"/><rect x="1192" y="457" width="7.1" height="3.6" fill="#c8d0ff" opacity="0.75" transform="rotate(8 1192 457)"/><rect x="1284" y="681" width="8.4" height="4.0" fill="#e8ecff" opacity="0.41" transform="rotate(-5 1284 681)"/><rect x="1157" y="103" width="6.7" height="3.5" fill="#ffffff" opacity="0.85" transform="rotate(25 1157 103)"/><rect x="1023" y="608" width="8.5" height="4.4" fill="#1a1838" opacity="0.55" transform="rotate(-14 1023 608)"/><rect x="1052" y="426" width="9.5" height="3.3" fill="#e8d8c0" opacity="0.98" transform="rotate(-11 1052 426)"/><rect x="877" y="202" width="8.0" height="3.0" fill="#f0dcc8" opacity="0.76" transform="rotate(-18 877 202)"/><rect x="980" y="363" width="8.1" height="3.4" fill="#f0a8a8" opacity="0.72" transform="rotate(-22 980 363)"/><rect x="1036" y="166" width="10.4" height="3.8" fill="#ffffff" opacity="0.87" transform="rotate(-4 1036 166)"/><rect x="824" y="480" width="10.7" height="4.4" fill="#ffffff" opacity="0.70" transform="rotate(150 824 480)"/><rect x="891" y="27" width="7.3" height="3.2" fill="#f4f4ff" opacity="0.85" transform="rotate(-7 891 27)"/><rect x="1060" y="12" width="6.5" height="3.8" fill="#ffe4e0" opacity="0.94" transform="rotate(15 1060 12)"/><rect x="1098" y="552" width="10.8" height="3.6" fill="#ffffff" opacity="0.84" transform="rotate(10 1098 552)"/><rect x="965" y="184" width="8.2" height="3.6" fill="#c8d0ff" opacity="0.81" transform="rotate(66 965 184)"/><rect x="1112" y="222" width="6.9" height="3.5" fill="#ffe4e0" opacity="0.85" transform="rotate(134 1112 222)"/><rect x="886" y="148" width="7.0" height="3.2" fill="#ffffff" opacity="0.82" transform="rotate(2 886 148)"/><rect x="870" y="168" width="10.5" height="3.5" fill="#c8d0ff" opacity="0.98" transform="rotate(-20 870 168)"/><rect x="734" y="179" width="7.3" height="3.4" fill="#1a1838" opacity="0.67" transform="rotate(9 734 179)"/><rect x="1236" y="693" width="7.2" height="4.0" fill="#f0dcc8" opacity="0.49" transform="rotate(38 1236 693)"/><rect x="736" y="609" width="9.1" height="3.2" fill="#c8d0ff" opacity="0.44" transform="rotate(82 736 609)"/><rect x="791" y="296" width="7.5" height="4.0" fill="#c8d0ff" opacity="0.75" transform="rotate(6 791 296)"/><rect x="752" y="128" width="8.6" height="4.6" fill="#ffc8c8" opacity="0.61" transform="rotate(133 752 128)"/><rect x="984" y="680" width="7.0" height="3.3" fill="#1a1838" opacity="0.58" transform="rotate(21 984 680)"/><rect x="572" y="202" width="7.7" height="3.3" fill="#c8d0ff" opacity="0.50" transform="rotate(-8 572 202)"/><rect x="825" y="15" width="10.8" height="3.4" fill="#f4f4ff" opacity="0.88" transform="rotate(-20 825 15)"/><rect x="1120" y="608" width="10.0" height="3.9" fill="#e8ecff" opacity="0.46" transform="rotate(15 1120 608)"/><rect x="806" y="36" width="10.3" height="3.2" fill="#c8d0ff" opacity="0.89" transform="rotate(153 806 36)"/><rect x="1225" y="65" width="10.9" height="3.3" fill="#e8d8c0" opacity="0.74" transform="rotate(6 1225 65)"/><rect x="1170" y="328" width="7.9" height="4.0" fill="#1a1838" opacity="0.65" transform="rotate(-11 1170 328)"/><rect x="995" y="504" width="8.6" height="3.2" fill="#ffe4e0" opacity="0.76" transform="rotate(22 995 504)"/><rect x="791" y="697" width="8.1" height="3.5" fill="#f0dcc8" opacity="0.57" transform="rotate(-18 791 697)"/><rect x="644" y="313" width="8.6" height="3.8" fill="#c8d0ff" opacity="0.64" transform="rotate(22 644 313)"/><rect x="1083" y="226" width="10.3" height="4.1" fill="#ffc8c8" opacity="0.86" transform="rotate(70 1083 226)"/><rect x="841" y="340" width="6.8" height="3.7" fill="#f0a8a8" opacity="0.87" transform="rotate(-3 841 340)"/><rect x="981" y="490" width="7.1" height="4.4" fill="#f4f4ff" opacity="0.86" transform="rotate(61 981 490)"/><rect x="1136" y="88" width="10.5" height="3.1" fill="#a8dcc8" opacity="0.74" transform="rotate(130 1136 88)"/><rect x="1033" y="635" width="9.3" height="3.8" fill="#f0a8a8" opacity="0.65" transform="rotate(57 1033 635)"/><rect x="951" y="681" width="10.9" height="4.6" fill="#f4f4ff" opacity="0.78" transform="rotate(117 951 681)"/><rect x="822" y="61" width="9.5" height="3.3" fill="#e8d8c0" opacity="0.76" transform="rotate(24 822 61)"/><rect x="1036" y="535" width="6.9" height="3.3" fill="#f0a8a8" opacity="0.94" transform="rotate(6 1036 535)"/><rect x="994" y="528" width="8.6" height="3.0" fill="#f4f4ff" opacity="0.81" transform="rotate(18 994 528)"/><rect x="854" y="399" width="8.9" height="3.2" fill="#f4f4ff" opacity="0.84" transform="rotate(14 854 399)"/><rect x="1140" y="111" width="7.8" height="4.2" fill="#ffffff" opacity="0.76" transform="rotate(-13 1140 111)"/><rect x="1124" y="414" width="8.6" height="4.4" fill="#e8d8c0" opacity="0.70" transform="rotate(28 1124 414)"/><rect x="1356" y="454" width="7.0" height="4.3" fill="#a8dcc8" opacity="0.55" transform="rotate(20 1356 454)"/><rect x="902" y="233" width="9.3" height="3.6" fill="#ffc8c8" opacity="0.82" transform="rotate(-0 902 233)"/><rect x="967" y="71" width="10.6" height="3.5" fill="#ffffff" opacity="0.99" transform="rotate(-1 967 71)"/><rect x="1117" y="654" width="6.9" height="4.0" fill="#ffc8c8" opacity="0.60" transform="rotate(-12 1117 654)"/><rect x="859" y="296" width="7.0" height="3.5" fill="#ffc8c8" opacity="0.92" transform="rotate(-17 859 296)"/><rect x="784" y="491" width="9.7" height="3.1" fill="#c8d0ff" opacity="0.82" transform="rotate(94 784 491)"/><rect x="890" y="288" width="9.6" height="3.6" fill="#ffffff" opacity="0.88" transform="rotate(23 890 288)"/><rect x="908" y="435" width="7.9" height="3.8" fill="#ffffff" opacity="0.78" transform="rotate(1 908 435)"/><rect x="1029" y="216" width="10.4" height="3.6" fill="#26244a" opacity="0.78" transform="rotate(-11 1029 216)"/><rect x="825" y="32" width="7.2" height="3.2" fill="#ffffff" opacity="0.77" transform="rotate(-11 825 32)"/><rect x="1064" y="75" width="9.7" height="4.0" fill="#c8d0ff" opacity="0.82" transform="rotate(98 1064 75)"/><rect x="1153" y="494" width="10.9" height="4.5" fill="#ffc8c8" opacity="0.83" transform="rotate(-21 1153 494)"/><rect x="1061" y="493" width="10.5" height="4.2" fill="#a8dcc8" opacity="0.73" transform="rotate(64 1061 493)"/><rect x="804" y="103" width="7.9" height="4.5" fill="#f0dcc8" opacity="0.79" transform="rotate(21 804 103)"/><rect x="1387" y="598" width="8.6" height="3.1" fill="#c8d0ff" opacity="0.53" transform="rotate(-6 1387 598)"/><rect x="1369" y="572" width="8.8" height="3.8" fill="#ffffff" opacity="0.46" transform="rotate(18 1369 572)"/><rect x="812" y="588" width="10.1" height="4.1" fill="#e8ecff" opacity="0.78" transform="rotate(83 812 588)"/><rect x="728" y="688" width="8.0" height="4.1" fill="#ffffff" opacity="0.41" transform="rotate(131 728 688)"/><rect x="1039" y="59" width="9.7" height="3.7" fill="#c8d0ff" opacity="0.82" transform="rotate(176 1039 59)"/><rect x="831" y="102" width="7.3" height="4.0" fill="#f0dcc8" opacity="0.82" transform="rotate(27 831 102)"/><rect x="904" y="410" width="10.8" height="4.2" fill="#ffffff" opacity="0.96" transform="rotate(15 904 410)"/><rect x="1106" y="532" width="8.0" height="3.3" fill="#a8dcc8" opacity="0.76" transform="rotate(-17 1106 532)"/><rect x="1040" y="95" width="9.2" height="4.3" fill="#e8d8c0" opacity="0.97" transform="rotate(24 1040 95)"/><rect x="832" y="227" width="6.8" height="3.0" fill="#e8ecff" opacity="0.89" transform="rotate(22 832 227)"/><rect x="903" y="405" width="7.1" height="3.1" fill="#ffffff" opacity="0.93" transform="rotate(135 903 405)"/><rect x="1390" y="208" width="8.1" height="4.3" fill="#ffffff" opacity="0.62" transform="rotate(67 1390 208)"/><rect x="1154" y="379" width="9.0" height="3.6" fill="#a8dcc8" opacity="0.65" transform="rotate(20 1154 379)"/><rect x="1278" y="638" width="7.0" height="4.6" fill="#f0a8a8" opacity="0.33" transform="rotate(11 1278 638)"/><rect x="1084" y="30" width="9.1" height="4.6" fill="#e8d8c0" opacity="0.71" transform="rotate(141 1084 30)"/><rect x="1087" y="393" width="8.1" height="3.8" fill="#ffffff" opacity="0.70" transform="rotate(10 1087 393)"/><rect x="1228" y="366" width="9.0" height="4.6" fill="#ffffff" opacity="0.74" transform="rotate(-18 1228 366)"/><rect x="862" y="653" width="10.4" height="4.5" fill="#ffffff" opacity="0.60" transform="rotate(106 862 653)"/><rect x="1069" y="451" width="8.8" height="4.5" fill="#ffc8c8" opacity="0.70" transform="rotate(-23 1069 451)"/><rect x="923" y="592" width="9.6" height="3.8" fill="#f0dcc8" opacity="0.72" transform="rotate(4 923 592)"/><rect x="909" y="312" width="8.0" height="3.6" fill="#f0dcc8" opacity="0.86" transform="rotate(47 909 312)"/><rect x="871" y="262" width="7.6" height="4.4" fill="#ffffff" opacity="0.92" transform="rotate(-18 871 262)"/><rect x="774" y="260" width="7.6" height="4.0" fill="#e8ecff" opacity="0.70" transform="rotate(-12 774 260)"/><rect x="722" y="60" width="7.4" height="3.1" fill="#ffffff" opacity="0.68" transform="rotate(123 722 60)"/><rect x="957" y="43" width="9.0" height="3.2" fill="#e8ecff" opacity="0.83" transform="rotate(-22 957 43)"/><rect x="1061" y="488" width="7.4" height="4.5" fill="#ffffff" opacity="0.85" transform="rotate(3 1061 488)"/><rect x="1045" y="60" width="7.4" height="4.4" fill="#e8ecff" opacity="0.94" transform="rotate(23 1045 60)"/><rect x="915" y="251" width="6.7" height="3.4" fill="#c8d0ff" opacity="0.81" transform="rotate(153 915 251)"/><rect x="1106" y="525" width="10.4" height="4.6" fill="#e8ecff" opacity="0.83" transform="rotate(9 1106 525)"/><rect x="922" y="218" width="8.8" height="4.3" fill="#f4f4ff" opacity="0.90" transform="rotate(-3 922 218)"/><rect x="1312" y="17" width="10.7" height="4.1" fill="#ffe4e0" opacity="0.61" transform="rotate(-16 1312 17)"/><rect x="594" y="632" width="9.2" height="3.6" fill="#c8d0ff" opacity="0.38" transform="rotate(25 594 632)"/><rect x="984" y="25" width="6.7" height="3.3" fill="#ffffff" opacity="0.77" transform="rotate(-16 984 25)"/><rect x="691" y="572" width="8.7" height="4.0" fill="#ffffff" opacity="0.63" transform="rotate(-16 691 572)"/><rect x="567" y="603" width="7.6" height="4.2" fill="#ffc8c8" opacity="0.29" transform="rotate(104 567 603)"/><rect x="830" y="433" width="7.7" height="4.5" fill="#e8ecff" opacity="0.79" transform="rotate(112 830 433)"/><rect x="1330" y="416" width="10.7" height="3.5" fill="#ffe4e0" opacity="0.63" transform="rotate(-5 1330 416)"/><rect x="764" y="464" width="6.5" height="3.8" fill="#ffc8c8" opacity="0.79" transform="rotate(144 764 464)"/><rect x="727" y="483" width="10.3" height="3.9" fill="#f0a8a8" opacity="0.61" transform="rotate(-22 727 483)"/><rect x="1071" y="27" width="8.9" height="3.1" fill="#1a1838" opacity="0.71" transform="rotate(-22 1071 27)"/><rect x="917" y="161" width="8.1" height="3.1" fill="#26244a" opacity="0.90" transform="rotate(18 917 161)"/><rect x="892" y="377" width="10.7" height="4.0" fill="#e8ecff" opacity="0.91" transform="rotate(54 892 377)"/><rect x="851" y="571" width="10.1" height="3.3" fill="#e8d8c0" opacity="0.87" transform="rotate(16 851 571)"/><rect x="573" y="355" width="9.4" height="4.1" fill="#e8ecff" opacity="0.48" transform="rotate(156 573 355)"/><rect x="1155" y="689" width="7.3" height="4.1" fill="#a8dcc8" opacity="0.55" transform="rotate(13 1155 689)"/><rect x="878" y="54" width="10.4" height="4.2" fill="#f0a8a8" opacity="0.97" transform="rotate(19 878 54)"/><rect x="959" y="183" width="10.5" height="3.8" fill="#a8dcc8" opacity="0.75" transform="rotate(24 959 183)"/><rect x="912" y="328" width="8.6" height="4.1" fill="#f0dcc8" opacity="0.80" transform="rotate(-24 912 328)"/><rect x="1155" y="51" width="9.1" height="3.5" fill="#e8d8c0" opacity="0.89" transform="rotate(-2 1155 51)"/><rect x="1003" y="61" width="6.9" height="4.1" fill="#ffffff" opacity="0.98" transform="rotate(13 1003 61)"/><rect x="781" y="282" width="8.0" height="4.5" fill="#ffc8c8" opacity="0.68" transform="rotate(154 781 282)"/><rect x="1093" y="649" width="10.1" height="4.5" fill="#1a1838" opacity="0.59" transform="rotate(-4 1093 649)"/><rect x="1266" y="578" width="10.8" height="3.9" fill="#1a1838" opacity="0.77" transform="rotate(-4 1266 578)"/><rect x="838" y="452" width="7.3" height="4.6" fill="#1a1838" opacity="0.89" transform="rotate(4 838 452)"/><rect x="1021" y="40" width="10.9" height="4.5" fill="#f4f4ff" opacity="0.70" transform="rotate(163 1021 40)"/><rect x="1000" y="351" width="9.3" height="4.4" fill="#ffc8c8" opacity="0.94" transform="rotate(25 1000 351)"/><rect x="1096" y="194" width="6.9" height="3.9" fill="#f4f4ff" opacity="0.89" transform="rotate(4 1096 194)"/><rect x="764" y="528" width="9.3" height="3.3" fill="#f0a8a8" opacity="0.64" transform="rotate(12 764 528)"/><rect x="1044" y="240" width="8.8" height="3.7" fill="#a8dcc8" opacity="0.78" transform="rotate(-5 1044 240)"/><rect x="1326" y="170" width="9.5" height="3.3" fill="#ffffff" opacity="0.66" transform="rotate(-14 1326 170)"/><rect x="1048" y="344" width="8.2" height="4.4" fill="#f4f4ff" opacity="0.92" transform="rotate(72 1048 344)"/><rect x="894" y="234" width="9.5" height="4.1" fill="#e8d8c0" opacity="0.88" transform="rotate(-3 894 234)"/><rect x="614" y="418" width="8.1" height="3.7" fill="#ffffff" opacity="0.65" transform="rotate(-6 614 418)"/><rect x="1237" y="330" width="8.7" height="3.1" fill="#a8dcc8" opacity="0.75" transform="rotate(12 1237 330)"/><rect x="791" y="538" width="9.7" height="3.9" fill="#f0dcc8" opacity="0.85" transform="rotate(25 791 538)"/><rect x="888" y="381" width="6.6" height="4.2" fill="#1a1838" opacity="0.97" transform="rotate(59 888 381)"/><rect x="859" y="484" width="8.4" height="3.2" fill="#ffffff" opacity="0.69" transform="rotate(-2 859 484)"/><rect x="1313" y="230" width="8.4" height="3.1" fill="#26244a" opacity="0.55" transform="rotate(2 1313 230)"/><rect x="1182" y="511" width="8.8" height="3.9" fill="#26244a" opacity="0.82" transform="rotate(142 1182 511)"/><rect x="1232" y="450" width="7.4" height="3.0" fill="#ffe4e0" opacity="0.57" transform="rotate(21 1232 450)"/><rect x="778" y="54" width="7.8" height="3.5" fill="#26244a" opacity="0.74" transform="rotate(6 778 54)"/><rect x="827" y="247" width="8.5" height="4.3" fill="#e8d8c0" opacity="0.72" transform="rotate(3 827 247)"/><rect x="1351" y="455" width="8.0" height="3.7" fill="#1a1838" opacity="0.51" transform="rotate(165 1351 455)"/><rect x="1402" y="276" width="9.7" height="3.3" fill="#ffffff" opacity="0.48" transform="rotate(19 1402 276)"/><rect x="1365" y="520" width="6.8" height="4.3" fill="#ffffff" opacity="0.53" transform="rotate(2 1365 520)"/><rect x="1111" y="690" width="9.2" height="4.4" fill="#ffffff" opacity="0.49" transform="rotate(4 1111 690)"/><rect x="825" y="217" width="8.0" height="3.7" fill="#ffffff" opacity="0.73" transform="rotate(3 825 217)"/><rect x="712" y="231" width="7.7" height="3.0" fill="#e8ecff" opacity="0.77" transform="rotate(-9 712 231)"/><rect x="778" y="354" width="10.5" height="4.2" fill="#ffffff" opacity="0.73" transform="rotate(125 778 354)"/><rect x="958" y="300" width="8.8" height="3.7" fill="#ffe4e0" opacity="0.71" transform="rotate(1 958 300)"/><rect x="1315" y="238" width="9.3" height="3.5" fill="#c8d0ff" opacity="0.65" transform="rotate(151 1315 238)"/><rect x="1068" y="537" width="8.5" height="3.6" fill="#f4f4ff" opacity="0.73" transform="rotate(3 1068 537)"/><rect x="844" y="398" width="9.0" height="3.1" fill="#f4f4ff" opacity="0.67" transform="rotate(172 844 398)"/><rect x="1125" y="126" width="8.3" height="4.0" fill="#ffffff" opacity="0.86" transform="rotate(3 1125 126)"/><rect x="840" y="437" width="8.6" height="4.4" fill="#1a1838" opacity="0.76" transform="rotate(80 840 437)"/><rect x="898" y="427" width="9.3" height="3.0" fill="#ffffff" opacity="0.93" transform="rotate(-14 898 427)"/><rect x="1221" y="261" width="7.0" height="4.0" fill="#ffffff" opacity="0.66" transform="rotate(-12 1221 261)"/><rect x="882" y="525" width="9.7" height="4.3" fill="#f0dcc8" opacity="0.94" transform="rotate(160 882 525)"/><rect x="959" y="637" width="7.0" height="3.0" fill="#ffe4e0" opacity="0.64" transform="rotate(55 959 637)"/><rect x="749" y="474" width="8.4" height="4.0" fill="#f0a8a8" opacity="0.62" transform="rotate(-23 749 474)"/><rect x="910" y="202" width="10.7" height="4.1" fill="#ffc8c8" opacity="0.98" transform="rotate(117 910 202)"/><rect x="788" y="251" width="6.5" height="3.7" fill="#ffffff" opacity="0.72" transform="rotate(4 788 251)"/><rect x="741" y="448" width="10.7" height="4.0" fill="#1a1838" opacity="0.75" transform="rotate(2 741 448)"/><rect x="884" y="460" width="8.5" height="3.8" fill="#ffffff" opacity="0.82" transform="rotate(-23 884 460)"/><rect x="809" y="183" width="7.2" height="3.6" fill="#e8ecff" opacity="0.81" transform="rotate(-7 809 183)"/><rect x="1084" y="634" width="7.6" height="4.0" fill="#ffffff" opacity="0.67" transform="rotate(11 1084 634)"/><rect x="803" y="575" width="7.3" height="3.7" fill="#e8ecff" opacity="0.86" transform="rotate(-3 803 575)"/><rect x="862" y="567" width="8.3" height="3.6" fill="#ffffff" opacity="0.97" transform="rotate(-20 862 567)"/><rect x="1089" y="28" width="8.4" height="4.3" fill="#e8ecff" opacity="0.73" transform="rotate(51 1089 28)"/><rect x="1096" y="625" width="9.4" height="3.4" fill="#a8dcc8" opacity="0.61" transform="rotate(-10 1096 625)"/><rect x="917" y="470" width="9.3" height="4.4" fill="#a8dcc8" opacity="0.82" transform="rotate(-8 917 470)"/><rect x="642" y="497" width="9.1" height="4.4" fill="#f0a8a8" opacity="0.57" transform="rotate(-11 642 497)"/><rect x="776" y="423" width="7.7" height="3.8" fill="#f0a8a8" opacity="0.77" transform="rotate(14 776 423)"/><rect x="1144" y="171" width="7.7" height="4.1" fill="#a8dcc8" opacity="0.80" transform="rotate(34 1144 171)"/><rect x="907" y="404" width="7.7" height="3.6" fill="#ffffff" opacity="0.89" transform="rotate(21 907 404)"/><rect x="676" y="469" width="6.6" height="3.7" fill="#26244a" opacity="0.65" transform="rotate(15 676 469)"/><rect x="1031" y="490" width="7.7" height="3.9" fill="#f0a8a8" opacity="0.89" transform="rotate(141 1031 490)"/><rect x="629" y="108" width="9.2" height="4.1" fill="#ffffff" opacity="0.65" transform="rotate(-4 629 108)"/><rect x="852" y="278" width="10.7" height="3.2" fill="#26244a" opacity="0.92" transform="rotate(-12 852 278)"/><rect x="742" y="663" width="6.8" height="4.0" fill="#e8ecff" opacity="0.47" transform="rotate(-1 742 663)"/><rect x="727" y="110" width="8.0" height="3.2" fill="#f0a8a8" opacity="0.72" transform="rotate(159 727 110)"/><rect x="646" y="613" width="9.5" height="4.6" fill="#ffffff" opacity="0.31" transform="rotate(14 646 613)"/><rect x="946" y="359" width="8.8" height="3.8" fill="#f4f4ff" opacity="1.00" transform="rotate(109 946 359)"/><rect x="1348" y="568" width="7.8" height="3.7" fill="#c8d0ff" opacity="0.67" transform="rotate(71 1348 568)"/><rect x="1037" y="496" width="7.0" height="4.1" fill="#e8ecff" opacity="0.87" transform="rotate(23 1037 496)"/><rect x="920" y="87" width="7.5" height="3.2" fill="#a8dcc8" opacity="0.70" transform="rotate(7 920 87)"/><rect x="817" y="628" width="7.1" height="4.4" fill="#f0dcc8" opacity="0.52" transform="rotate(12 817 628)"/><rect x="986" y="445" width="6.7" height="4.5" fill="#e8d8c0" opacity="0.71" transform="rotate(-8 986 445)"/><rect x="1084" y="567" width="7.4" height="3.1" fill="#ffffff" opacity="0.91" transform="rotate(-1 1084 567)"/><rect x="817" y="673" width="8.6" height="3.3" fill="#26244a" opacity="0.53" transform="rotate(-22 817 673)"/><rect x="1019" y="119" width="9.0" height="4.5" fill="#26244a" opacity="0.75" transform="rotate(-13 1019 119)"/><rect x="986" y="536" width="8.4" height="4.1" fill="#ffffff" opacity="0.75" transform="rotate(11 986 536)"/><rect x="716" y="590" width="8.7" height="4.0" fill="#ffffff" opacity="0.63" transform="rotate(32 716 590)"/><rect x="782" y="80" width="10.9" height="4.3" fill="#f0a8a8" opacity="0.88" transform="rotate(15 782 80)"/><rect x="959" y="644" width="10.0" height="3.2" fill="#1a1838" opacity="0.71" transform="rotate(-2 959 644)"/><rect x="912" y="130" width="6.7" height="3.6" fill="#ffffff" opacity="0.81" transform="rotate(23 912 130)"/><rect x="1211" y="102" width="7.1" height="4.0" fill="#ffffff" opacity="0.61" transform="rotate(-21 1211 102)"/><rect x="858" y="62" width="10.1" height="4.5" fill="#f0a8a8" opacity="0.85" transform="rotate(15 858 62)"/><rect x="1211" y="373" width="6.9" height="4.2" fill="#f0dcc8" opacity="0.66" transform="rotate(-13 1211 373)"/><rect x="990" y="386" width="8.5" height="3.4" fill="#ffffff" opacity="0.74" transform="rotate(136 990 386)"/><rect x="885" y="266" width="9.5" height="3.8" fill="#ffffff" opacity="0.79" transform="rotate(6 885 266)"/><rect x="884" y="233" width="6.9" height="3.7" fill="#e8ecff" opacity="0.86" transform="rotate(-23 884 233)"/><rect x="1137" y="618" width="10.5" height="4.0" fill="#a8dcc8" opacity="0.44" transform="rotate(16 1137 618)"/><rect x="707" y="135" width="10.8" height="3.5" fill="#f0a8a8" opacity="0.75" transform="rotate(-2 707 135)"/><rect x="1178" y="259" width="6.5" height="3.9" fill="#f0a8a8" opacity="0.81" transform="rotate(19 1178 259)"/><rect x="607" y="436" width="9.5" height="3.7" fill="#ffffff" opacity="0.63" transform="rotate(-15 607 436)"/><rect x="1041" y="93" width="8.9" height="3.9" fill="#f0a8a8" opacity="0.75" transform="rotate(24 1041 93)"/><rect x="1115" y="589" width="10.9" height="3.3" fill="#f0a8a8" opacity="0.69" transform="rotate(13 1115 589)"/><rect x="1015" y="138" width="10.6" height="3.8" fill="#26244a" opacity="0.92" transform="rotate(43 1015 138)"/><rect x="734" y="332" width="8.2" height="3.7" fill="#a8dcc8" opacity="0.62" transform="rotate(59 734 332)"/><rect x="1017" y="43" width="8.2" height="3.6" fill="#26244a" opacity="0.81" transform="rotate(-23 1017 43)"/><rect x="985" y="74" width="10.0" height="3.1" fill="#f4f4ff" opacity="0.80" transform="rotate(9 985 74)"/><rect x="1079" y="337" width="9.9" height="3.3" fill="#f0dcc8" opacity="0.82" transform="rotate(22 1079 337)"/><rect x="998" y="81" width="8.7" height="3.1" fill="#ffe4e0" opacity="0.88" transform="rotate(-20 998 81)"/><rect x="895" y="674" width="10.7" height="3.3" fill="#c8d0ff" opacity="0.57" transform="rotate(25 895 674)"/><rect x="1149" y="336" width="7.4" height="4.4" fill="#ffe4e0" opacity="0.85" transform="rotate(0 1149 336)"/><rect x="699" y="306" width="6.8" height="4.4" fill="#f0dcc8" opacity="0.66" transform="rotate(73 699 306)"/><rect x="1003" y="375" width="7.7" height="3.5" fill="#f0a8a8" opacity="0.71" transform="rotate(2 1003 375)"/><rect x="766" y="430" width="10.1" height="3.1" fill="#f4f4ff" opacity="0.67" transform="rotate(6 766 430)"/><rect x="595" y="575" width="6.6" height="3.0" fill="#1a1838" opacity="0.65" transform="rotate(-17 595 575)"/><rect x="738" y="477" width="6.9" height="3.6" fill="#1a1838" opacity="0.77" transform="rotate(174 738 477)"/><rect x="662" y="491" width="9.1" height="3.8" fill="#e8d8c0" opacity="0.66" transform="rotate(9 662 491)"/><rect x="1059" y="642" width="6.7" height="3.8" fill="#ffe4e0" opacity="0.52" transform="rotate(30 1059 642)"/><rect x="994" y="242" width="10.5" height="3.0" fill="#f4f4ff" opacity="0.82" transform="rotate(12 994 242)"/><rect x="1242" y="349" width="9.7" height="3.1" fill="#ffc8c8" opacity="0.78" transform="rotate(31 1242 349)"/><rect x="879" y="107" width="8.5" height="3.4" fill="#e8d8c0" opacity="0.84" transform="rotate(-20 879 107)"/><rect x="568" y="657" width="10.6" height="4.3" fill="#c8d0ff" opacity="0.31" transform="rotate(83 568 657)"/><rect x="1149" y="272" width="6.6" height="3.1" fill="#f0a8a8" opacity="0.70" transform="rotate(-15 1149 272)"/><rect x="964" y="195" width="10.0" height="4.4" fill="#ffffff" opacity="0.84" transform="rotate(174 964 195)"/><rect x="1007" y="538" width="7.7" height="3.8" fill="#ffe4e0" opacity="0.99" transform="rotate(8 1007 538)"/><rect x="758" y="173" width="7.5" height="4.5" fill="#26244a" opacity="0.69" transform="rotate(151 758 173)"/><rect x="830" y="55" width="9.9" height="3.1" fill="#f0a8a8" opacity="0.75" transform="rotate(4 830 55)"/><rect x="1135" y="331" width="6.8" height="4.6" fill="#c8d0ff" opacity="0.90" transform="rotate(-6 1135 331)"/><rect x="679" y="127" width="9.7" height="3.3" fill="#ffffff" opacity="0.77" transform="rotate(24 679 127)"/><rect x="1158" y="586" width="9.2" height="3.2" fill="#a8dcc8" opacity="0.71" transform="rotate(15 1158 586)"/><rect x="1187" y="146" width="8.1" height="4.6" fill="#ffffff" opacity="0.73" transform="rotate(2 1187 146)"/><rect x="1082" y="67" width="10.6" height="4.3" fill="#f0a8a8" opacity="0.73" transform="rotate(108 1082 67)"/><rect x="904" y="596" width="9.4" height="3.5" fill="#1a1838" opacity="0.88" transform="rotate(-0 904 596)"/><rect x="1020" y="172" width="10.6" height="4.0" fill="#ffffff" opacity="0.82" transform="rotate(10 1020 172)"/><rect x="940" y="219" width="7.9" height="3.6" fill="#f0dcc8" opacity="0.89" transform="rotate(-19 940 219)"/><rect x="862" y="497" width="9.1" height="3.5" fill="#ffe4e0" opacity="0.78" transform="rotate(75 862 497)"/><rect x="631" y="608" width="8.1" height="3.7" fill="#ffffff" opacity="0.31" transform="rotate(140 631 608)"/><rect x="775" y="244" width="8.2" height="3.6" fill="#1a1838" opacity="0.78" transform="rotate(150 775 244)"/><rect x="1208" y="589" width="8.6" height="3.6" fill="#ffc8c8" opacity="0.79" transform="rotate(23 1208 589)"/><rect x="1154" y="530" width="6.6" height="3.2" fill="#e8d8c0" opacity="0.90" transform="rotate(77 1154 530)"/><rect x="1169" y="630" width="10.2" height="3.1" fill="#e8ecff" opacity="0.45" transform="rotate(18 1169 630)"/><rect x="875" y="522" width="9.1" height="4.3" fill="#c8d0ff" opacity="0.95" transform="rotate(139 875 522)"/><rect x="800" y="372" width="9.4" height="3.0" fill="#a8dcc8" opacity="0.75" transform="rotate(-2 800 372)"/><rect x="1039" y="521" width="10.3" height="3.2" fill="#ffe4e0" opacity="0.80" transform="rotate(155 1039 521)"/><rect x="852" y="554" width="6.5" height="4.5" fill="#c8d0ff" opacity="0.72" transform="rotate(13 852 554)"/><rect x="1044" y="47" width="9.3" height="4.0" fill="#ffffff" opacity="0.74" transform="rotate(23 1044 47)"/><rect x="821" y="29" width="8.2" height="4.5" fill="#c8d0ff" opacity="0.66" transform="rotate(-9 821 29)"/><rect x="982" y="448" width="10.4" height="3.1" fill="#ffffff" opacity="0.77" transform="rotate(124 982 448)"/><rect x="1342" y="132" width="10.7" height="3.9" fill="#e8ecff" opacity="0.54" transform="rotate(-22 1342 132)"/><rect x="905" y="41" width="10.5" height="3.6" fill="#ffffff" opacity="0.88" transform="rotate(-7 905 41)"/><rect x="1233" y="480" width="6.8" height="3.7" fill="#ffffff" opacity="0.66" transform="rotate(15 1233 480)"/><rect x="1168" y="568" width="6.5" height="3.9" fill="#c8d0ff" opacity="0.68" transform="rotate(171 1168 568)"/><rect x="828" y="164" width="9.0" height="3.1" fill="#ffffff" opacity="0.92" transform="rotate(10 828 164)"/><rect x="999" y="604" width="10.5" height="3.6" fill="#ffffff" opacity="0.77" transform="rotate(131 999 604)"/><rect x="803" y="195" width="10.3" height="4.3" fill="#e8ecff" opacity="0.65" transform="rotate(23 803 195)"/><rect x="1004" y="205" width="10.6" height="4.6" fill="#c8d0ff" opacity="0.86" transform="rotate(4 1004 205)"/><rect x="1256" y="464" width="9.5" height="4.4" fill="#f0dcc8" opacity="0.63" transform="rotate(-16 1256 464)"/><rect x="1238" y="53" width="9.9" height="3.8" fill="#1a1838" opacity="0.61" transform="rotate(-11 1238 53)"/><rect x="1145" y="553" width="9.0" height="4.6" fill="#ffffff" opacity="0.78" transform="rotate(112 1145 553)"/><rect x="854" y="284" width="11.0" height="4.2" fill="#c8d0ff" opacity="0.82" transform="rotate(-15 854 284)"/><rect x="1106" y="570" width="9.3" height="4.3" fill="#f4f4ff" opacity="0.85" transform="rotate(25 1106 570)"/><rect x="945" y="95" width="7.0" height="3.1" fill="#26244a" opacity="0.88" transform="rotate(-3 945 95)"/><rect x="630" y="665" width="6.6" height="3.6" fill="#ffe4e0" opacity="0.31" transform="rotate(-20 630 665)"/><rect x="874" y="177" width="8.1" height="4.4" fill="#ffffff" opacity="0.72" transform="rotate(-2 874 177)"/><rect x="640" y="591" width="8.1" height="3.5" fill="#ffe4e0" opacity="0.67" transform="rotate(176 640 591)"/><rect x="1175" y="417" width="7.7" height="3.3" fill="#f0dcc8" opacity="0.66" transform="rotate(38 1175 417)"/><rect x="1394" y="413" width="6.7" height="4.2" fill="#f4f4ff" opacity="0.48" transform="rotate(14 1394 413)"/><rect x="1048" y="489" width="10.5" height="3.7" fill="#26244a" opacity="0.92" transform="rotate(0 1048 489)"/><rect x="859" y="144" width="7.5" height="4.0" fill="#ffc8c8" opacity="0.93" transform="rotate(51 859 144)"/><rect x="876" y="521" width="7.5" height="3.0" fill="#ffe4e0" opacity="0.85" transform="rotate(152 876 521)"/><rect x="619" y="446" width="9.0" height="3.9" fill="#ffe4e0" opacity="0.50" transform="rotate(-13 619 446)"/><rect x="867" y="304" width="10.7" height="3.8" fill="#ffe4e0" opacity="0.93" transform="rotate(125 867 304)"/><rect x="926" y="9" width="9.7" height="3.9" fill="#ffffff" opacity="0.74" transform="rotate(15 926 9)"/><rect x="849" y="380" width="8.9" height="3.8" fill="#ffffff" opacity="0.75" transform="rotate(-20 849 380)"/><rect x="1032" y="543" width="9.9" height="3.8" fill="#e8d8c0" opacity="0.85" transform="rotate(20 1032 543)"/><rect x="1229" y="697" width="9.3" height="3.6" fill="#26244a" opacity="0.45" transform="rotate(106 1229 697)"/><rect x="1131" y="445" width="9.4" height="3.9" fill="#e8d8c0" opacity="0.84" transform="rotate(16 1131 445)"/><rect x="1217" y="326" width="7.2" height="3.8" fill="#1a1838" opacity="0.76" transform="rotate(-7 1217 326)"/><rect x="935" y="142" width="8.8" height="4.6" fill="#c8d0ff" opacity="0.72" transform="rotate(-21 935 142)"/><rect x="900" y="286" width="7.8" height="4.3" fill="#1a1838" opacity="0.87" transform="rotate(6 900 286)"/><rect x="1216" y="324" width="9.6" height="3.5" fill="#c8d0ff" opacity="0.67" transform="rotate(1 1216 324)"/><rect x="1013" y="336" width="8.1" height="4.4" fill="#ffffff" opacity="0.89" transform="rotate(-2 1013 336)"/><rect x="1154" y="496" width="9.7" height="3.6" fill="#ffffff" opacity="0.86" transform="rotate(24 1154 496)"/><rect x="1112" y="211" width="8.3" height="3.9" fill="#a8dcc8" opacity="0.72" transform="rotate(1 1112 211)"/><rect x="811" y="276" width="7.1" height="3.8" fill="#c8d0ff" opacity="0.67" transform="rotate(19 811 276)"/><rect x="1166" y="349" width="9.6" height="3.6" fill="#26244a" opacity="0.68" transform="rotate(111 1166 349)"/><rect x="938" y="93" width="6.7" height="4.0" fill="#ffc8c8" opacity="0.84" transform="rotate(-7 938 93)"/><rect x="650" y="165" width="7.7" height="3.9" fill="#ffc8c8" opacity="0.67" transform="rotate(34 650 165)"/><rect x="989" y="185" width="9.6" height="3.9" fill="#c8d0ff" opacity="0.76" transform="rotate(25 989 185)"/><rect x="969" y="460" width="11.0" height="4.4" fill="#1a1838" opacity="0.93" transform="rotate(-23 969 460)"/><rect x="1337" y="339" width="7.2" height="4.1" fill="#ffffff" opacity="0.63" transform="rotate(80 1337 339)"/><rect x="1020" y="597" width="10.0" height="3.2" fill="#ffe4e0" opacity="0.79" transform="rotate(33 1020 597)"/><rect x="750" y="664" width="8.4" height="4.3" fill="#ffc8c8" opacity="0.43" transform="rotate(-2 750 664)"/><rect x="999" y="310" width="8.3" height="3.1" fill="#ffffff" opacity="0.94" transform="rotate(17 999 310)"/><rect x="799" y="237" width="10.2" height="3.7" fill="#ffffff" opacity="0.78" transform="rotate(19 799 237)"/><rect x="661" y="517" width="8.2" height="4.1" fill="#ffffff" opacity="0.64" transform="rotate(5 661 517)"/><rect x="888" y="533" width="7.2" height="4.0" fill="#e8ecff" opacity="0.97" transform="rotate(-19 888 533)"/><rect x="939" y="678" width="9.8" height="4.1" fill="#ffffff" opacity="0.71" transform="rotate(-23 939 678)"/><rect x="1004" y="551" width="7.6" height="3.8" fill="#ffffff" opacity="0.72" transform="rotate(15 1004 551)"/><rect x="738" y="155" width="8.6" height="4.0" fill="#f0dcc8" opacity="0.81" transform="rotate(74 738 155)"/><rect x="908" y="691" width="10.2" height="4.2" fill="#f4f4ff" opacity="0.66" transform="rotate(10 908 691)"/><rect x="792" y="200" width="9.2" height="3.7" fill="#f0dcc8" opacity="0.76" transform="rotate(-13 792 200)"/><rect x="782" y="379" width="6.8" height="3.9" fill="#ffffff" opacity="0.88" transform="rotate(100 782 379)"/><rect x="668" y="340" width="7.9" height="4.3" fill="#ffe4e0" opacity="0.54" transform="rotate(3 668 340)"/><rect x="1064" y="221" width="8.6" height="4.5" fill="#ffe4e0" opacity="0.94" transform="rotate(175 1064 221)"/><rect x="1317" y="478" width="8.1" height="4.0" fill="#f4f4ff" opacity="0.66" transform="rotate(171 1317 478)"/><rect x="1334" y="183" width="8.0" height="4.2" fill="#ffffff" opacity="0.61" transform="rotate(8 1334 183)"/><rect x="723" y="480" width="8.2" height="3.1" fill="#e8d8c0" opacity="0.59" transform="rotate(94 723 480)"/><rect x="798" y="616" width="8.2" height="3.8" fill="#f0a8a8" opacity="0.45" transform="rotate(41 798 616)"/><rect x="937" y="441" width="7.6" height="3.1" fill="#f4f4ff" opacity="0.82" transform="rotate(3 937 441)"/><rect x="1304" y="468" width="8.5" height="4.1" fill="#ffe4e0" opacity="0.66" transform="rotate(-18 1304 468)"/><rect x="954" y="694" width="7.4" height="3.7" fill="#ffc8c8" opacity="0.63" transform="rotate(-21 954 694)"/><rect x="679" y="198" width="7.9" height="3.4" fill="#ffe4e0" opacity="0.71" transform="rotate(8 679 198)"/><rect x="1415" y="326" width="9.7" height="4.3" fill="#c8d0ff" opacity="0.44" transform="rotate(74 1415 326)"/><rect x="904" y="282" width="8.0" height="4.0" fill="#ffffff" opacity="0.85" transform="rotate(13 904 282)"/><rect x="863" y="600" width="9.5" height="3.4" fill="#ffffff" opacity="0.77" transform="rotate(-4 863 600)"/><rect x="889" y="244" width="10.8" height="3.6" fill="#26244a" opacity="0.80" transform="rotate(-13 889 244)"/><rect x="563" y="523" width="9.5" height="3.1" fill="#ffc8c8" opacity="0.51" transform="rotate(-22 563 523)"/><rect x="979" y="99" width="6.6" height="3.8" fill="#c8d0ff" opacity="0.72" transform="rotate(17 979 99)"/><rect x="832" y="119" width="10.0" height="3.8" fill="#ffc8c8" opacity="0.72" transform="rotate(1 832 119)"/><rect x="987" y="676" width="9.4" height="3.8" fill="#ffc8c8" opacity="0.68" transform="rotate(11 987 676)"/><rect x="726" y="529" width="7.3" height="4.0" fill="#ffffff" opacity="0.61" transform="rotate(9 726 529)"/><rect x="787" y="549" width="8.7" height="3.5" fill="#c8d0ff" opacity="0.63" transform="rotate(1 787 549)"/><rect x="1349" y="56" width="10.5" height="3.9" fill="#ffffff" opacity="0.57" transform="rotate(22 1349 56)"/><rect x="1118" y="449" width="8.3" height="4.0" fill="#c8d0ff" opacity="0.78" transform="rotate(8 1118 449)"/><rect x="1137" y="393" width="9.7" height="3.3" fill="#e8d8c0" opacity="0.85" transform="rotate(110 1137 393)"/><rect x="1049" y="680" width="8.2" height="3.6" fill="#e8d8c0" opacity="0.65" transform="rotate(-24 1049 680)"/><rect x="1175" y="127" width="8.6" height="4.4" fill="#e8d8c0" opacity="0.62" transform="rotate(15 1175 127)"/><rect x="1173" y="634" width="7.9" height="4.5" fill="#26244a" opacity="0.47" transform="rotate(152 1173 634)"/><rect x="829" y="662" width="10.4" height="3.3" fill="#f0dcc8" opacity="0.46" transform="rotate(-14 829 662)"/><rect x="992" y="472" width="9.5" height="3.4" fill="#f0a8a8" opacity="0.86" transform="rotate(23 992 472)"/><rect x="798" y="677" width="10.8" height="3.5" fill="#a8dcc8" opacity="0.48" transform="rotate(-21 798 677)"/><rect x="721" y="34" width="9.6" height="3.3" fill="#f4f4ff" opacity="0.73" transform="rotate(131 721 34)"/><rect x="1201" y="294" width="9.6" height="3.4" fill="#ffc8c8" opacity="0.78" transform="rotate(13 1201 294)"/><rect x="1121" y="11" width="7.3" height="3.5" fill="#ffffff" opacity="0.87" transform="rotate(29 1121 11)"/><rect x="1304" y="214" width="10.9" height="4.5" fill="#ffffff" opacity="0.69" transform="rotate(133 1304 214)"/><rect x="1219" y="546" width="8.8" height="4.6" fill="#ffffff" opacity="0.69" transform="rotate(-3 1219 546)"/><rect x="791" y="119" width="10.4" height="4.2" fill="#e8d8c0" opacity="0.88" transform="rotate(167 791 119)"/><rect x="1075" y="393" width="7.5" height="4.6" fill="#a8dcc8" opacity="0.78" transform="rotate(23 1075 393)"/><rect x="1309" y="74" width="9.5" height="4.5" fill="#ffffff" opacity="0.57" transform="rotate(17 1309 74)"/><rect x="761" y="588" width="7.4" height="3.0" fill="#ffffff" opacity="0.76" transform="rotate(5 761 588)"/><rect x="1247" y="404" width="8.9" height="3.5" fill="#c8d0ff" opacity="0.70" transform="rotate(-17 1247 404)"/><rect x="1114" y="491" width="7.7" height="4.0" fill="#e8d8c0" opacity="0.87" transform="rotate(37 1114 491)"/><rect x="841" y="691" width="10.1" height="3.6" fill="#f4f4ff" opacity="0.59" transform="rotate(-12 841 691)"/><rect x="998" y="669" width="10.3" height="3.8" fill="#26244a" opacity="0.61" transform="rotate(25 998 669)"/><rect x="674" y="426" width="8.4" height="3.5" fill="#ffe4e0" opacity="0.65" transform="rotate(3 674 426)"/><rect x="1041" y="264" width="9.6" height="3.1" fill="#1a1838" opacity="0.86" transform="rotate(142 1041 264)"/><rect x="1004" y="81" width="10.0" height="4.0" fill="#ffc8c8" opacity="0.83" transform="rotate(3 1004 81)"/><rect x="744" y="229" width="10.8" height="3.1" fill="#ffffff" opacity="0.65" transform="rotate(-19 744 229)"/><rect x="1001" y="426" width="10.0" height="3.9" fill="#f4f4ff" opacity="0.73" transform="rotate(86 1001 426)"/><rect x="1111" y="460" width="6.8" height="3.9" fill="#e8d8c0" opacity="0.76" transform="rotate(26 1111 460)"/><rect x="724" y="248" width="9.1" height="3.8" fill="#26244a" opacity="0.72" transform="rotate(-5 724 248)"/><rect x="1128" y="122" width="8.3" height="4.5" fill="#ffc8c8" opacity="0.91" transform="rotate(78 1128 122)"/><rect x="1117" y="467" width="8.7" height="4.5" fill="#ffffff" opacity="0.71" transform="rotate(-12 1117 467)"/><rect x="1280" y="441" width="8.9" height="3.2" fill="#f0a8a8" opacity="0.67" transform="rotate(10 1280 441)"/><rect x="750" y="453" width="7.6" height="3.4" fill="#f0a8a8" opacity="0.82" transform="rotate(-21 750 453)"/><rect x="697" y="674" width="7.2" height="4.5" fill="#e8ecff" opacity="0.39" transform="rotate(-25 697 674)"/><rect x="973" y="62" width="8.5" height="3.8" fill="#1a1838" opacity="0.84" transform="rotate(21 973 62)"/><rect x="1028" y="646" width="8.0" height="3.2" fill="#ffc8c8" opacity="0.54" transform="rotate(-19 1028 646)"/><rect x="969" y="520" width="10.1" height="4.0" fill="#ffffff" opacity="0.91" transform="rotate(125 969 520)"/><rect x="1322" y="649" width="9.2" height="4.1" fill="#ffffff" opacity="0.31" transform="rotate(2 1322 649)"/><rect x="834" y="376" width="9.4" height="3.0" fill="#a8dcc8" opacity="0.80" transform="rotate(71 834 376)"/><rect x="1209" y="97" width="9.6" height="4.6" fill="#e8ecff" opacity="0.71" transform="rotate(110 1209 97)"/><rect x="942" y="331" width="10.2" height="4.1" fill="#ffffff" opacity="0.77" transform="rotate(15 942 331)"/><rect x="1152" y="585" width="8.7" height="4.4" fill="#f4f4ff" opacity="0.65" transform="rotate(161 1152 585)"/><rect x="922" y="53" width="7.1" height="3.0" fill="#1a1838" opacity="0.75" transform="rotate(-1 922 53)"/><rect x="1082" y="390" width="7.7" height="3.8" fill="#ffe4e0" opacity="0.88" transform="rotate(-10 1082 390)"/><rect x="795" y="449" width="8.2" height="3.1" fill="#ffffff" opacity="0.90" transform="rotate(38 795 449)"/><rect x="604" y="280" width="6.6" height="4.4" fill="#e8d8c0" opacity="0.50" transform="rotate(12 604 280)"/><rect x="911" y="74" width="9.4" height="4.5" fill="#ffffff" opacity="0.79" transform="rotate(-18 911 74)"/><rect x="894" y="400" width="7.9" height="4.1" fill="#ffffff" opacity="0.75" transform="rotate(-22 894 400)"/><rect x="935" y="67" width="9.4" height="4.5" fill="#a8dcc8" opacity="0.81" transform="rotate(23 935 67)"/><rect x="650" y="603" width="10.6" height="4.5" fill="#ffffff" opacity="0.31" transform="rotate(15 650 603)"/><rect x="743" y="602" width="9.4" height="3.7" fill="#ffffff" opacity="0.40" transform="rotate(-19 743 602)"/><rect x="934" y="309" width="6.8" height="3.8" fill="#f0a8a8" opacity="0.96" transform="rotate(20 934 309)"/><rect x="987" y="307" width="7.6" height="4.3" fill="#26244a" opacity="0.89" transform="rotate(-24 987 307)"/><rect x="677" y="453" width="7.5" height="3.3" fill="#f4f4ff" opacity="0.71" transform="rotate(17 677 453)"/><rect x="1005" y="172" width="6.6" height="3.6" fill="#e8ecff" opacity="0.93" transform="rotate(154 1005 172)"/><rect x="997" y="130" width="10.6" height="3.0" fill="#26244a" opacity="0.75" transform="rotate(-25 997 130)"/><rect x="1061" y="628" width="10.7" height="3.3" fill="#26244a" opacity="0.61" transform="rotate(-9 1061 628)"/><rect x="1006" y="315" width="6.8" height="4.0" fill="#f4f4ff" opacity="1.00" transform="rotate(-8 1006 315)"/><rect x="951" y="517" width="10.9" height="4.5" fill="#f4f4ff" opacity="0.85" transform="rotate(9 951 517)"/><rect x="702" y="613" width="11.0" height="4.3" fill="#ffffff" opacity="0.45" transform="rotate(-13 702 613)"/><rect x="869" y="687" width="9.5" height="4.6" fill="#c8d0ff" opacity="0.50" transform="rotate(-9 869 687)"/><rect x="743" y="642" width="9.7" height="3.0" fill="#f0dcc8" opacity="0.50" transform="rotate(165 743 642)"/><rect x="676" y="564" width="8.4" height="4.3" fill="#f4f4ff" opacity="0.63" transform="rotate(24 676 564)"/><rect x="607" y="676" width="9.3" height="3.8" fill="#26244a" opacity="0.31" transform="rotate(-8 607 676)"/><rect x="1224" y="405" width="7.3" height="4.3" fill="#c8d0ff" opacity="0.77" transform="rotate(-19 1224 405)"/><rect x="731" y="521" width="7.9" height="4.3" fill="#e8ecff" opacity="0.76" transform="rotate(12 731 521)"/><rect x="899" y="177" width="6.6" height="4.4" fill="#26244a" opacity="0.94" transform="rotate(11 899 177)"/><rect x="825" y="104" width="9.9" height="3.5" fill="#ffe4e0" opacity="0.84" transform="rotate(-20 825 104)"/><rect x="1072" y="507" width="9.1" height="3.9" fill="#a8dcc8" opacity="0.98" transform="rotate(23 1072 507)"/><rect x="1386" y="523" width="10.6" height="3.2" fill="#f0dcc8" opacity="0.52" transform="rotate(-20 1386 523)"/><rect x="1069" y="69" width="7.1" height="4.5" fill="#e8ecff" opacity="0.85" transform="rotate(-21 1069 69)"/><rect x="1032" y="314" width="7.5" height="4.3" fill="#e8d8c0" opacity="0.93" transform="rotate(-8 1032 314)"/><rect x="942" y="85" width="9.0" height="4.1" fill="#e8d8c0" opacity="0.73" transform="rotate(64 942 85)"/><rect x="718" y="249" width="8.6" height="3.1" fill="#e8d8c0" opacity="0.72" transform="rotate(2 718 249)"/><rect x="878" y="188" width="7.0" height="3.1" fill="#ffffff" opacity="0.96" transform="rotate(139 878 188)"/><rect x="939" y="604" width="10.9" height="4.5" fill="#f0dcc8" opacity="0.55" transform="rotate(7 939 604)"/><rect x="1212" y="442" width="10.7" height="3.6" fill="#f4f4ff" opacity="0.62" transform="rotate(14 1212 442)"/><rect x="1015" y="133" width="9.6" height="4.5" fill="#ffffff" opacity="0.99" transform="rotate(19 1015 133)"/><rect x="769" y="19" width="9.7" height="3.1" fill="#ffffff" opacity="0.83" transform="rotate(100 769 19)"/><rect x="818" y="107" width="7.6" height="4.3" fill="#f4f4ff" opacity="0.90" transform="rotate(18 818 107)"/><rect x="921" y="373" width="10.9" height="4.0" fill="#ffffff" opacity="0.94" transform="rotate(-15 921 373)"/><rect x="1120" y="576" width="6.7" height="4.2" fill="#ffffff" opacity="0.93" transform="rotate(-21 1120 576)"/><rect x="684" y="645" width="7.1" height="3.3" fill="#ffc8c8" opacity="0.47" transform="rotate(27 684 645)"/><rect x="1118" y="653" width="9.8" height="4.5" fill="#a8dcc8" opacity="0.45" transform="rotate(137 1118 653)"/><rect x="775" y="543" width="10.9" height="3.7" fill="#a8dcc8" opacity="0.69" transform="rotate(117 775 543)"/><rect x="1248" y="550" width="10.8" height="4.4" fill="#ffffff" opacity="0.58" transform="rotate(-3 1248 550)"/><rect x="1069" y="468" width="7.1" height="4.4" fill="#e8d8c0" opacity="0.93" transform="rotate(9 1069 468)"/><rect x="1337" y="533" width="11.0" height="4.4" fill="#a8dcc8" opacity="0.63" transform="rotate(147 1337 533)"/><rect x="1055" y="607" width="6.6" height="4.1" fill="#e8ecff" opacity="0.65" transform="rotate(-16 1055 607)"/><rect x="814" y="696" width="8.2" height="4.5" fill="#ffffff" opacity="0.46" transform="rotate(89 814 696)"/><rect x="821" y="337" width="8.4" height="3.4" fill="#26244a" opacity="0.90" transform="rotate(17 821 337)"/><rect x="914" y="20" width="7.9" height="3.9" fill="#1a1838" opacity="0.94" transform="rotate(-22 914 20)"/><rect x="619" y="35" width="7.2" height="3.4" fill="#f4f4ff" opacity="0.58" transform="rotate(-24 619 35)"/><rect x="1106" y="602" width="9.8" height="3.6" fill="#ffffff" opacity="0.54" transform="rotate(8 1106 602)"/><rect x="844" y="348" width="9.0" height="4.1" fill="#ffc8c8" opacity="0.73" transform="rotate(149 844 348)"/><rect x="917" y="118" width="8.2" height="4.4" fill="#ffc8c8" opacity="0.85" transform="rotate(66 917 118)"/><rect x="743" y="376" width="9.3" height="3.3" fill="#1a1838" opacity="0.69" transform="rotate(3 743 376)"/><rect x="756" y="206" width="10.8" height="3.8" fill="#e8d8c0" opacity="0.68" transform="rotate(-3 756 206)"/><rect x="723" y="345" width="6.6" height="4.2" fill="#e8ecff" opacity="0.75" transform="rotate(-8 723 345)"/><rect x="1051" y="468" width="10.5" height="4.3" fill="#ffffff" opacity="0.76" transform="rotate(21 1051 468)"/><rect x="1036" y="401" width="9.8" height="3.9" fill="#f4f4ff" opacity="0.88" transform="rotate(7 1036 401)"/><rect x="873" y="346" width="9.7" height="3.7" fill="#ffffff" opacity="0.70" transform="rotate(96 873 346)"/><rect x="842" y="351" width="9.4" height="3.9" fill="#f0a8a8" opacity="0.83" transform="rotate(67 842 351)"/><rect x="1196" y="215" width="10.6" height="3.4" fill="#26244a" opacity="0.70" transform="rotate(164 1196 215)"/><rect x="671" y="660" width="6.8" height="3.5" fill="#f0dcc8" opacity="0.41" transform="rotate(177 671 660)"/><rect x="1064" y="641" width="10.6" height="4.1" fill="#e8d8c0" opacity="0.60" transform="rotate(76 1064 641)"/><rect x="856" y="308" width="7.9" height="3.4" fill="#f4f4ff" opacity="0.83" transform="rotate(-3 856 308)"/><rect x="865" y="525" width="9.0" height="4.3" fill="#f0a8a8" opacity="0.70" transform="rotate(-2 865 525)"/><rect x="1026" y="398" width="7.3" height="3.6" fill="#ffffff" opacity="0.96" transform="rotate(2 1026 398)"/><rect x="1066" y="60" width="7.1" height="4.0" fill="#ffe4e0" opacity="0.86" transform="rotate(109 1066 60)"/><rect x="888" y="383" width="9.3" height="4.2" fill="#ffe4e0" opacity="0.89" transform="rotate(10 888 383)"/><rect x="1127" y="98" width="9.6" height="3.4" fill="#e8d8c0" opacity="0.92" transform="rotate(-11 1127 98)"/><rect x="1063" y="130" width="7.6" height="4.0" fill="#c8d0ff" opacity="0.78" transform="rotate(24 1063 130)"/><rect x="901" y="43" width="9.7" height="3.9" fill="#f0a8a8" opacity="0.95" transform="rotate(-13 901 43)"/><rect x="871" y="29" width="7.6" height="4.6" fill="#a8dcc8" opacity="0.85" transform="rotate(-23 871 29)"/><rect x="892" y="294" width="8.6" height="3.3" fill="#f4f4ff" opacity="0.84" transform="rotate(103 892 294)"/><rect x="1165" y="174" width="10.7" height="3.2" fill="#f0a8a8" opacity="0.85" transform="rotate(-10 1165 174)"/><rect x="714" y="239" width="7.1" height="3.7" fill="#c8d0ff" opacity="0.58" transform="rotate(-18 714 239)"/><rect x="896" y="215" width="9.1" height="3.7" fill="#ffffff" opacity="0.95" transform="rotate(93 896 215)"/><rect x="1216" y="372" width="8.4" height="4.1" fill="#ffffff" opacity="0.64" transform="rotate(1 1216 372)"/><rect x="661" y="404" width="7.7" height="4.5" fill="#ffc8c8" opacity="0.70" transform="rotate(22 661 404)"/><rect x="962" y="170" width="8.6" height="4.2" fill="#a8dcc8" opacity="0.78" transform="rotate(21 962 170)"/><rect x="797" y="233" width="8.8" height="3.0" fill="#e8ecff" opacity="0.74" transform="rotate(107 797 233)"/><rect x="950" y="694" width="7.0" height="3.4" fill="#e8ecff" opacity="0.56" transform="rotate(12 950 694)"/><rect x="1022" y="612" width="9.8" height="3.5" fill="#a8dcc8" opacity="0.68" transform="rotate(3 1022 612)"/><rect x="764" y="494" width="10.3" height="4.0" fill="#f0a8a8" opacity="0.66" transform="rotate(179 764 494)"/><rect x="1005" y="445" width="6.6" height="4.3" fill="#e8d8c0" opacity="0.79" transform="rotate(-18 1005 445)"/><rect x="964" y="523" width="8.7" height="4.2" fill="#e8d8c0" opacity="0.79" transform="rotate(61 964 523)"/><rect x="1307" y="237" width="10.9" height="4.0" fill="#ffc8c8" opacity="0.57" transform="rotate(77 1307 237)"/><rect x="1011" y="208" width="10.5" height="3.9" fill="#a8dcc8" opacity="0.86" transform="rotate(170 1011 208)"/><rect x="813" y="281" width="8.5" height="3.4" fill="#ffc8c8" opacity="0.67" transform="rotate(5 813 281)"/><rect x="1034" y="640" width="7.9" height="3.4" fill="#c8d0ff" opacity="0.71" transform="rotate(-10 1034 640)"/><rect x="1258" y="40" width="9.6" height="3.4" fill="#e8d8c0" opacity="0.67" transform="rotate(-7 1258 40)"/><rect x="1155" y="474" width="10.3" height="3.4" fill="#ffffff" opacity="0.86" transform="rotate(3 1155 474)"/><rect x="716" y="652" width="10.9" height="3.9" fill="#1a1838" opacity="0.46" transform="rotate(109 716 652)"/><rect x="1077" y="209" width="8.2" height="3.0" fill="#f4f4ff" opacity="0.91" transform="rotate(132 1077 209)"/><rect x="1036" y="127" width="10.7" height="4.5" fill="#ffffff" opacity="0.97" transform="rotate(11 1036 127)"/><rect x="802" y="175" width="10.1" height="3.5" fill="#ffffff" opacity="0.88" transform="rotate(178 802 175)"/><rect x="979" y="211" width="9.4" height="4.2" fill="#26244a" opacity="0.74" transform="rotate(44 979 211)"/><rect x="1167" y="290" width="7.2" height="4.0" fill="#e8ecff" opacity="0.74" transform="rotate(14 1167 290)"/><rect x="910" y="37" width="9.3" height="3.3" fill="#e8ecff" opacity="0.99" transform="rotate(3 910 37)"/><rect x="1234" y="497" width="8.6" height="3.8" fill="#ffc8c8" opacity="0.75" transform="rotate(152 1234 497)"/><rect x="1263" y="533" width="8.3" height="3.9" fill="#ffc8c8" opacity="0.63" transform="rotate(8 1263 533)"/><rect x="1077" y="74" width="6.6" height="3.7" fill="#f4f4ff" opacity="0.89" transform="rotate(19 1077 74)"/><rect x="997" y="54" width="8.0" height="3.2" fill="#e8d8c0" opacity="0.92" transform="rotate(122 997 54)"/><rect x="962" y="696" width="8.0" height="3.8" fill="#ffffff" opacity="0.65" transform="rotate(-4 962 696)"/><rect x="1078" y="342" width="8.1" height="4.2" fill="#26244a" opacity="0.87" transform="rotate(8 1078 342)"/><rect x="619" y="694" width="7.9" height="3.7" fill="#ffc8c8" opacity="0.37" transform="rotate(14 619 694)"/><rect x="987" y="380" width="8.0" height="3.5" fill="#f4f4ff" opacity="0.95" transform="rotate(-4 987 380)"/><rect x="1007" y="14" width="10.4" height="3.6" fill="#a8dcc8" opacity="0.75" transform="rotate(10 1007 14)"/><rect x="748" y="505" width="7.2" height="3.2" fill="#f0a8a8" opacity="0.76" transform="rotate(-24 748 505)"/><rect x="598" y="183" width="6.8" height="3.8" fill="#ffffff" opacity="0.55" transform="rotate(3 598 183)"/><rect x="928" y="592" width="7.3" height="4.5" fill="#ffffff" opacity="0.96" transform="rotate(-5 928 592)"/><rect x="1158" y="642" width="10.8" height="4.4" fill="#26244a" opacity="0.55" transform="rotate(9 1158 642)"/><rect x="1266" y="277" width="7.6" height="4.4" fill="#ffe4e0" opacity="0.71" transform="rotate(-16 1266 277)"/><rect x="1020" y="22" width="10.2" height="3.4" fill="#f0dcc8" opacity="0.92" transform="rotate(176 1020 22)"/><rect x="771" y="625" width="9.1" height="4.4" fill="#a8dcc8" opacity="0.43" transform="rotate(21 771 625)"/><rect x="949" y="442" width="10.4" height="3.6" fill="#e8d8c0" opacity="0.91" transform="rotate(51 949 442)"/><rect x="908" y="544" width="10.1" height="4.1" fill="#f0dcc8" opacity="0.94" transform="rotate(70 908 544)"/><rect x="686" y="681" width="10.4" height="4.4" fill="#26244a" opacity="0.47" transform="rotate(13 686 681)"/><rect x="958" y="693" width="9.8" height="3.9" fill="#ffffff" opacity="0.64" transform="rotate(-21 958 693)"/><rect x="905" y="284" width="7.1" height="4.5" fill="#f0dcc8" opacity="0.85" transform="rotate(-13 905 284)"/><rect x="1006" y="147" width="9.9" height="4.5" fill="#ffffff" opacity="0.86" transform="rotate(147 1006 147)"/><rect x="902" y="502" width="8.5" height="4.3" fill="#ffc8c8" opacity="0.86" transform="rotate(9 902 502)"/><rect x="1023" y="148" width="7.9" height="3.4" fill="#ffffff" opacity="0.72" transform="rotate(159 1023 148)"/><rect x="1038" y="37" width="7.3" height="3.5" fill="#f4f4ff" opacity="0.94" transform="rotate(18 1038 37)"/><rect x="1019" y="150" width="8.8" height="3.1" fill="#e8d8c0" opacity="0.89" transform="rotate(21 1019 150)"/><rect x="644" y="376" width="9.7" height="4.4" fill="#1a1838" opacity="0.56" transform="rotate(146 644 376)"/><rect x="975" y="140" width="8.1" height="3.1" fill="#ffe4e0" opacity="0.89" transform="rotate(2 975 140)"/><rect x="1381" y="461" width="9.1" height="3.5" fill="#ffffff" opacity="0.49" transform="rotate(87 1381 461)"/><rect x="1141" y="282" width="7.2" height="4.1" fill="#ffffff" opacity="0.86" transform="rotate(10 1141 282)"/><rect x="1111" y="655" width="8.7" height="4.0" fill="#e8ecff" opacity="0.46" transform="rotate(84 1111 655)"/><rect x="1176" y="37" width="7.8" height="4.4" fill="#e8d8c0" opacity="0.77" transform="rotate(5 1176 37)"/><rect x="1383" y="687" width="8.3" height="3.4" fill="#26244a" opacity="0.28" transform="rotate(18 1383 687)"/><rect x="796" y="163" width="8.1" height="3.2" fill="#1a1838" opacity="0.79" transform="rotate(32 796 163)"/><rect x="1193" y="156" width="7.1" height="4.2" fill="#1a1838" opacity="0.60" transform="rotate(150 1193 156)"/><rect x="956" y="59" width="10.2" height="4.4" fill="#f4f4ff" opacity="0.97" transform="rotate(-12 956 59)"/><rect x="928" y="15" width="7.4" height="3.8" fill="#e8d8c0" opacity="0.81" transform="rotate(38 928 15)"/><rect x="1154" y="648" width="9.0" height="3.8" fill="#f0dcc8" opacity="0.56" transform="rotate(13 1154 648)"/><rect x="1123" y="351" width="9.8" height="3.3" fill="#ffffff" opacity="0.83" transform="rotate(47 1123 351)"/><rect x="911" y="520" width="10.4" height="3.7" fill="#ffe4e0" opacity="0.75" transform="rotate(3 911 520)"/><rect x="1372" y="392" width="9.4" height="4.4" fill="#ffe4e0" opacity="0.59" transform="rotate(-12 1372 392)"/><rect x="1129" y="330" width="6.6" height="3.3" fill="#a8dcc8" opacity="0.91" transform="rotate(18 1129 330)"/><rect x="1171" y="460" width="6.9" height="3.8" fill="#ffffff" opacity="0.79" transform="rotate(14 1171 460)"/><rect x="1044" y="219" width="9.0" height="4.1" fill="#e8ecff" opacity="0.73" transform="rotate(129 1044 219)"/><rect x="1034" y="25" width="7.0" height="3.3" fill="#ffffff" opacity="0.86" transform="rotate(23 1034 25)"/><rect x="1223" y="43" width="9.0" height="3.1" fill="#ffe4e0" opacity="0.64" transform="rotate(-9 1223 43)"/><rect x="815" y="122" width="8.5" height="3.8" fill="#ffe4e0" opacity="0.79" transform="rotate(42 815 122)"/><rect x="1072" y="213" width="6.8" height="4.2" fill="#ffffff" opacity="0.75" transform="rotate(-13 1072 213)"/><rect x="705" y="392" width="7.6" height="4.0" fill="#a8dcc8" opacity="0.73" transform="rotate(-5 705 392)"/><rect x="1417" y="231" width="8.5" height="4.0" fill="#f0a8a8" opacity="0.48" transform="rotate(147 1417 231)"/><rect x="744" y="576" width="9.0" height="4.1" fill="#e8ecff" opacity="0.67" transform="rotate(177 744 576)"/><rect x="631" y="697" width="8.5" height="3.2" fill="#a8dcc8" opacity="0.30" transform="rotate(-25 631 697)"/><rect x="1057" y="700" width="9.2" height="4.6" fill="#f4f4ff" opacity="0.57" transform="rotate(-3 1057 700)"/><rect x="996" y="271" width="7.7" height="4.4" fill="#e8ecff" opacity="0.75" transform="rotate(35 996 271)"/><rect x="777" y="350" width="10.0" height="3.4" fill="#f4f4ff" opacity="0.62" transform="rotate(15 777 350)"/><rect x="972" y="385" width="10.0" height="3.6" fill="#ffffff" opacity="0.84" transform="rotate(70 972 385)"/><rect x="1186" y="626" width="7.4" height="3.8" fill="#ffffff" opacity="0.47" transform="rotate(-4 1186 626)"/><rect x="814" y="594" width="9.6" height="4.0" fill="#ffffff" opacity="0.79" transform="rotate(17 814 594)"/><rect x="639" y="390" width="10.5" height="3.4" fill="#ffc8c8" opacity="0.67" transform="rotate(-23 639 390)"/><rect x="722" y="700" width="7.5" height="4.3" fill="#f0a8a8" opacity="0.44" transform="rotate(-25 722 700)"/><rect x="579" y="604" width="6.8" height="3.3" fill="#f0dcc8" opacity="0.35" transform="rotate(-2 579 604)"/><rect x="851" y="587" width="8.1" height="3.2" fill="#ffffff" opacity="0.92" transform="rotate(-15 851 587)"/><rect x="692" y="653" width="10.8" height="4.4" fill="#e8ecff" opacity="0.45" transform="rotate(-12 692 653)"/><rect x="809" y="411" width="8.7" height="3.1" fill="#f4f4ff" opacity="0.85" transform="rotate(11 809 411)"/><rect x="1020" y="79" width="8.4" height="4.1" fill="#c8d0ff" opacity="0.80" transform="rotate(-10 1020 79)"/><rect x="1035" y="103" width="8.9" height="3.5" fill="#ffffff" opacity="0.83" transform="rotate(25 1035 103)"/><rect x="1011" y="94" width="6.7" height="4.0" fill="#c8d0ff" opacity="0.85" transform="rotate(36 1011 94)"/><rect x="1021" y="225" width="10.1" height="3.4" fill="#c8d0ff" opacity="0.74" transform="rotate(44 1021 225)"/><rect x="975" y="63" width="6.5" height="4.4" fill="#f4f4ff" opacity="0.73" transform="rotate(1 975 63)"/><rect x="1083" y="286" width="7.0" height="4.0" fill="#f4f4ff" opacity="0.72" transform="rotate(54 1083 286)"/><rect x="1100" y="154" width="7.0" height="3.1" fill="#c8d0ff" opacity="0.70" transform="rotate(-8 1100 154)"/><rect x="993" y="108" width="7.2" height="4.4" fill="#f0dcc8" opacity="0.84" transform="rotate(-16 993 108)"/><rect x="723" y="192" width="7.0" height="4.3" fill="#c8d0ff" opacity="0.77" transform="rotate(-1 723 192)"/><rect x="764" y="297" width="8.8" height="4.4" fill="#ffffff" opacity="0.69" transform="rotate(0 764 297)"/><rect x="1272" y="250" width="7.7" height="4.4" fill="#ffffff" opacity="0.61" transform="rotate(-10 1272 250)"/><rect x="984" y="512" width="8.4" height="3.9" fill="#f0a8a8" opacity="0.72" transform="rotate(19 984 512)"/><rect x="782" y="377" width="9.4" height="3.1" fill="#e8d8c0" opacity="0.71" transform="rotate(19 782 377)"/><rect x="1161" y="441" width="8.8" height="3.6" fill="#ffe4e0" opacity="0.80" transform="rotate(5 1161 441)"/><rect x="1101" y="115" width="7.8" height="3.9" fill="#e8ecff" opacity="0.83" transform="rotate(-9 1101 115)"/><rect x="1007" y="198" width="8.7" height="3.9" fill="#f4f4ff" opacity="0.75" transform="rotate(166 1007 198)"/><rect x="1031" y="503" width="8.0" height="3.0" fill="#e8d8c0" opacity="0.83" transform="rotate(-7 1031 503)"/><rect x="773" y="87" width="8.9" height="4.3" fill="#ffffff" opacity="0.69" transform="rotate(74 773 87)"/><rect x="1171" y="517" width="8.2" height="4.2" fill="#e8d8c0" opacity="0.66" transform="rotate(145 1171 517)"/><rect x="777" y="467" width="7.9" height="3.0" fill="#e8d8c0" opacity="0.72" transform="rotate(-1 777 467)"/><rect x="1143" y="299" width="10.8" height="4.6" fill="#ffe4e0" opacity="0.69" transform="rotate(-6 1143 299)"/><rect x="1045" y="326" width="6.8" height="4.5" fill="#ffc8c8" opacity="0.83" transform="rotate(99 1045 326)"/><rect x="1011" y="699" width="8.5" height="4.0" fill="#ffe4e0" opacity="0.59" transform="rotate(12 1011 699)"/><rect x="952" y="3" width="9.5" height="4.4" fill="#ffffff" opacity="0.86" transform="rotate(98 952 3)"/><rect x="1147" y="572" width="9.3" height="3.1" fill="#1a1838" opacity="0.83" transform="rotate(16 1147 572)"/><rect x="1247" y="630" width="10.8" height="4.0" fill="#ffffff" opacity="0.40" transform="rotate(79 1247 630)"/><rect x="687" y="572" width="8.8" height="4.1" fill="#a8dcc8" opacity="0.55" transform="rotate(17 687 572)"/><rect x="922" y="104" width="6.9" height="3.8" fill="#e8ecff" opacity="0.96" transform="rotate(-1 922 104)"/><rect x="811" y="279" width="7.1" height="3.9" fill="#f4f4ff" opacity="0.91" transform="rotate(52 811 279)"/><rect x="986" y="177" width="7.6" height="4.6" fill="#f0dcc8" opacity="0.77" transform="rotate(180 986 177)"/><rect x="990" y="689" width="10.9" height="4.0" fill="#f0dcc8" opacity="0.57" transform="rotate(-1 990 689)"/><rect x="958" y="630" width="8.0" height="3.3" fill="#ffffff" opacity="0.58" transform="rotate(-18 958 630)"/><rect x="936" y="671" width="10.5" height="4.0" fill="#ffffff" opacity="0.57" transform="rotate(14 936 671)"/><rect x="883" y="580" width="10.8" height="3.9" fill="#ffe4e0" opacity="0.78" transform="rotate(24 883 580)"/><rect x="1116" y="691" width="10.3" height="3.0" fill="#1a1838" opacity="0.45" transform="rotate(1 1116 691)"/><rect x="1088" y="487" width="6.8" height="3.5" fill="#ffffff" opacity="0.75" transform="rotate(39 1088 487)"/><rect x="978" y="344" width="9.6" height="3.1" fill="#ffe4e0" opacity="0.74" transform="rotate(51 978 344)"/><rect x="1100" y="180" width="7.3" height="4.4" fill="#a8dcc8" opacity="0.83" transform="rotate(120 1100 180)"/><rect x="956" y="407" width="9.8" height="4.4" fill="#26244a" opacity="0.94" transform="rotate(174 956 407)"/><rect x="750" y="575" width="6.8" height="3.1" fill="#26244a" opacity="0.84" transform="rotate(113 750 575)"/><rect x="698" y="553" width="9.8" height="4.4" fill="#f4f4ff" opacity="0.61" transform="rotate(101 698 553)"/><rect x="1042" y="224" width="7.6" height="4.6" fill="#f0a8a8" opacity="0.81" transform="rotate(37 1042 224)"/><rect x="1204" y="224" width="9.5" height="4.4" fill="#26244a" opacity="0.68" transform="rotate(54 1204 224)"/><rect x="900" y="507" width="10.2" height="3.9" fill="#ffffff" opacity="0.95" transform="rotate(12 900 507)"/><rect x="1250" y="164" width="10.6" height="4.4" fill="#a8dcc8" opacity="0.64" transform="rotate(-20 1250 164)"/><rect x="705" y="566" width="10.2" height="3.6" fill="#f4f4ff" opacity="0.65" transform="rotate(179 705 566)"/><rect x="1070" y="194" width="9.7" height="3.4" fill="#ffe4e0" opacity="0.82" transform="rotate(103 1070 194)"/><rect x="1152" y="16" width="8.9" height="4.1" fill="#ffe4e0" opacity="0.86" transform="rotate(19 1152 16)"/><rect x="886" y="80" width="6.7" height="3.1" fill="#ffe4e0" opacity="0.88" transform="rotate(-0 886 80)"/><rect x="1042" y="84" width="7.5" height="3.2" fill="#e8ecff" opacity="0.70" transform="rotate(168 1042 84)"/><rect x="1238" y="131" width="9.1" height="3.9" fill="#ffc8c8" opacity="0.75" transform="rotate(17 1238 131)"/><rect x="703" y="80" width="10.9" height="4.3" fill="#ffffff" opacity="0.68" transform="rotate(115 703 80)"/><rect x="1007" y="439" width="8.5" height="3.6" fill="#1a1838" opacity="0.99" transform="rotate(13 1007 439)"/><rect x="920" y="628" width="9.9" height="3.2" fill="#f0dcc8" opacity="0.70" transform="rotate(21 920 628)"/><rect x="639" y="221" width="7.3" height="4.2" fill="#c8d0ff" opacity="0.66" transform="rotate(92 639 221)"/><rect x="725" y="420" width="7.0" height="3.6" fill="#ffe4e0" opacity="0.60" transform="rotate(69 725 420)"/><rect x="1103" y="428" width="9.6" height="3.6" fill="#ffffff" opacity="0.94" transform="rotate(-5 1103 428)"/><rect x="841" y="596" width="9.9" height="3.6" fill="#f4f4ff" opacity="0.85" transform="rotate(12 841 596)"/><rect x="664" y="490" width="10.3" height="3.5" fill="#e8d8c0" opacity="0.72" transform="rotate(-22 664 490)"/><rect x="993" y="154" width="11.0" height="3.1" fill="#ffffff" opacity="1.00" transform="rotate(-2 993 154)"/><rect x="893" y="32" width="7.8" height="4.1" fill="#1a1838" opacity="0.79" transform="rotate(-7 893 32)"/><rect x="906" y="99" width="6.9" height="3.7" fill="#a8dcc8" opacity="0.72" transform="rotate(22 906 99)"/><rect x="1014" y="581" width="8.2" height="4.5" fill="#26244a" opacity="0.97" transform="rotate(21 1014 581)"/><rect x="1073" y="543" width="7.6" height="4.3" fill="#26244a" opacity="0.77" transform="rotate(52 1073 543)"/><rect x="971" y="404" width="7.0" height="4.3" fill="#c8d0ff" opacity="0.76" transform="rotate(1 971 404)"/><rect x="1010" y="312" width="9.9" height="4.2" fill="#f0a8a8" opacity="0.76" transform="rotate(5 1010 312)"/><rect x="740" y="50" width="11.0" height="4.3" fill="#e8ecff" opacity="0.63" transform="rotate(102 740 50)"/><rect x="874" y="309" width="10.5" height="3.0" fill="#f0a8a8" opacity="0.98" transform="rotate(118 874 309)"/><rect x="647" y="422" width="6.7" height="4.4" fill="#1a1838" opacity="0.53" transform="rotate(10 647 422)"/><rect x="894" y="437" width="7.3" height="3.9" fill="#f0a8a8" opacity="0.76" transform="rotate(24 894 437)"/><rect x="1283" y="210" width="10.8" height="4.4" fill="#f0dcc8" opacity="0.63" transform="rotate(157 1283 210)"/><rect x="851" y="264" width="7.5" height="3.5" fill="#1a1838" opacity="0.89" transform="rotate(129 851 264)"/><rect x="915" y="16" width="9.0" height="4.6" fill="#f4f4ff" opacity="0.93" transform="rotate(-24 915 16)"/><rect x="944" y="512" width="10.4" height="4.5" fill="#f4f4ff" opacity="0.81" transform="rotate(5 944 512)"/><rect x="684" y="23" width="9.7" height="3.7" fill="#e8ecff" opacity="0.67" transform="rotate(98 684 23)"/><rect x="800" y="266" width="9.4" height="4.0" fill="#a8dcc8" opacity="0.82" transform="rotate(-22 800 266)"/><rect x="912" y="402" width="7.2" height="3.1" fill="#ffe4e0" opacity="0.98" transform="rotate(-2 912 402)"/><rect x="1320" y="540" width="8.3" height="4.6" fill="#f4f4ff" opacity="0.51" transform="rotate(14 1320 540)"/><rect x="1344" y="357" width="10.0" height="3.5" fill="#ffffff" opacity="0.50" transform="rotate(132 1344 357)"/><rect x="1170" y="402" width="10.0" height="3.5" fill="#ffffff" opacity="0.81" transform="rotate(24 1170 402)"/><rect x="679" y="463" width="8.6" height="3.6" fill="#e8ecff" opacity="0.60" transform="rotate(-15 679 463)"/><rect x="1368" y="322" width="8.9" height="3.7" fill="#c8d0ff" opacity="0.64" transform="rotate(-7 1368 322)"/><rect x="910" y="685" width="6.5" height="3.9" fill="#1a1838" opacity="0.71" transform="rotate(23 910 685)"/><rect x="700" y="418" width="10.5" height="3.8" fill="#f0a8a8" opacity="0.65" transform="rotate(-3 700 418)"/></g>
<g fill="#1c1c3c"><ellipse cx="622" cy="548" rx="14" ry="16"/><path d="M596 574 Q622 555 648 574 L643 713 L601 713 Z"/></g>
<path d="M600 640 L742 598" stroke="#8a8ab8" stroke-width="6" stroke-linecap="round"/>
<g fill="#5a5078"><ellipse cx="980" cy="556" rx="13" ry="15"/><path d="M956 580 Q980 562 1004 580 L1000 706 L960 706 Z"/><path d="M995 586 L1038 486" stroke="#5a5078" stroke-width="9" stroke-linecap="round" fill="none"/></g>
<ellipse cx="980" cy="575" rx="20" ry="34" fill="#8a7a88" opacity="0.8"/>
<g fill="#2c3060"><ellipse cx="1162" cy="552" rx="13" ry="15"/><path d="M1138 576 Q1162 558 1186 576 L1182 702 L1142 702 Z"/></g>
<path d="M1150 640 L1262 574" stroke="#7a7aa8" stroke-width="5" stroke-linecap="round"/>
<g fill="#1e1c3c"><ellipse cx="1432" cy="598" rx="11" ry="13"/><path d="M1411 619 Q1432 603 1453 619 L1449 728 L1415 728 Z"/></g>
<rect x="0" y="590" width="1995" height="541" fill="url(#cfade)"/>
<path d="M-59 671 A20 24 0 0 1 -21 671" fill="none" stroke="#2040a8" stroke-width="3.0" stroke-opacity="0.04" transform="translate(0 -2)"/><g fill="#0b0d26" stroke="#1a2a70" stroke-width="2" stroke-opacity="0.00"><path d="M-91 755 Q-88 700 -40 695 Q8 700 11 755 Z"/><ellipse cx="-40" cy="673" rx="20" ry="24"/></g><path d="M-1 662 A19 24 0 0 1 36 662" fill="none" stroke="#3460d8" stroke-width="3.0" stroke-opacity="0.03" transform="translate(0 -2)"/><g fill="#0b0d26" stroke="#1a2a70" stroke-width="2" stroke-opacity="0.15"><path d="M-32 744 Q-30 690 17 685 Q65 690 67 744 Z"/><ellipse cx="17" cy="664" rx="19" ry="24"/></g><path d="M63 666 A20 25 0 0 1 102 666" fill="none" stroke="#3460d8" stroke-width="3.0" stroke-opacity="0.09" transform="translate(0 -2)"/><g fill="#0b0d26" stroke="#1a2a70" stroke-width="2" stroke-opacity="0.30"><path d="M31 752 Q33 695 83 690 Q132 695 135 752 Z"/><ellipse cx="83" cy="668" rx="20" ry="25"/></g><path d="M246 656 A19 23 0 0 1 282 656" fill="none" stroke="#2040a8" stroke-width="3.0" stroke-opacity="0.07" transform="translate(0 -2)"/><g fill="#0b0d26" stroke="#1a2a70" stroke-width="2" stroke-opacity="0.50"><path d="M216 735 Q218 683 264 679 Q309 683 311 735 Z"/><ellipse cx="264" cy="658" rx="19" ry="23"/></g><path d="M309 680 A18 22 0 0 1 345 680" fill="none" stroke="#2040a8" stroke-width="3.0" stroke-opacity="0.41" transform="translate(0 -2)"/><g fill="#0b0d26" stroke="#1a2a70" stroke-width="2" stroke-opacity="0.00"><path d="M280 759 Q282 707 327 702 Q372 707 374 759 Z"/><ellipse cx="327" cy="682" rx="18" ry="22"/></g><path d="M378 683 A18 22 0 0 1 413 683" fill="none" stroke="#2040a8" stroke-width="3.0" stroke-opacity="0.38" transform="translate(0 -2)"/><g fill="#0b0d26" stroke="#1a2a70" stroke-width="2" stroke-opacity="0.50"><path d="M349 760 Q351 710 395 705 Q439 710 441 760 Z"/><ellipse cx="395" cy="685" rx="18" ry="22"/></g><path d="M426 666 A20 24 0 0 1 465 666" fill="none" stroke="#2040a8" stroke-width="3.0" stroke-opacity="0.41" transform="translate(0 -2)"/><g fill="#0b0d26" stroke="#1a2a70" stroke-width="2" stroke-opacity="0.30"><path d="M394 752 Q397 695 445 691 Q494 695 497 752 Z"/><ellipse cx="445" cy="669" rx="20" ry="24"/></g><path d="M587 681 A22 27 0 0 1 629 681" fill="none" stroke="#3460d8" stroke-width="3.2" stroke-opacity="0.33" transform="translate(0 -2)"/><g fill="#0b0d26" stroke="#1a2a70" stroke-width="2" stroke-opacity="0.30"><path d="M552 774 Q555 713 608 708 Q661 713 664 774 Z"/><ellipse cx="608" cy="684" rx="22" ry="27"/></g><path d="M648 659 A20 24 0 0 1 687 659" fill="none" stroke="#1c3a98" stroke-width="3.0" stroke-opacity="0.14" transform="translate(0 -2)"/><g fill="#0b0d26" stroke="#1a2a70" stroke-width="2" stroke-opacity="0.15"><path d="M617 744 Q619 688 668 683 Q716 688 719 744 Z"/><ellipse cx="668" cy="661" rx="20" ry="24"/></g><path d="M695 665 A21 26 0 0 1 737 665" fill="none" stroke="#3460d8" stroke-width="3.1" stroke-opacity="0.61" transform="translate(0 -2)"/><g fill="#0b0d26" stroke="#1a2a70" stroke-width="2" stroke-opacity="0.50"><path d="M661 757 Q664 697 716 692 Q768 697 771 757 Z"/><ellipse cx="716" cy="668" rx="21" ry="26"/></g><path d="M808 661 A18 22 0 0 1 843 661" fill="none" stroke="#3460d8" stroke-width="3.0" stroke-opacity="0.17" transform="translate(0 -2)"/><g fill="#0b0d26" stroke="#1a2a70" stroke-width="2" stroke-opacity="0.00"><path d="M779 739 Q781 688 825 684 Q870 688 872 739 Z"/><ellipse cx="825" cy="664" rx="18" ry="22"/></g><path d="M942 658 A17 21 0 0 1 976 658" fill="none" stroke="#3460d8" stroke-width="3.0" stroke-opacity="0.20" transform="translate(0 -2)"/><g fill="#0b0d26" stroke="#1a2a70" stroke-width="2" stroke-opacity="0.15"><path d="M915 731 Q917 683 959 679 Q1001 683 1003 731 Z"/><ellipse cx="959" cy="660" rx="17" ry="21"/></g><path d="M1037 677 A21 25 0 0 1 1078 677" fill="none" stroke="#1c3a98" stroke-width="3.0" stroke-opacity="0.46" transform="translate(0 -2)"/><g fill="#0b0d26" stroke="#1a2a70" stroke-width="2" stroke-opacity="0.30"><path d="M1004 766 Q1007 708 1057 702 Q1108 708 1110 766 Z"/><ellipse cx="1057" cy="680" rx="21" ry="25"/></g><path d="M1209 670 A20 24 0 0 1 1248 670" fill="none" stroke="#1c3a98" stroke-width="3.0" stroke-opacity="0.77" transform="translate(0 -2)"/><g fill="#0b0d26" stroke="#1a2a70" stroke-width="2" stroke-opacity="0.15"><path d="M1177 756 Q1180 700 1229 695 Q1278 700 1280 756 Z"/><ellipse cx="1229" cy="673" rx="20" ry="24"/></g><path d="M1265 665 A17 21 0 0 1 1299 665" fill="none" stroke="#2a4cc0" stroke-width="3.0" stroke-opacity="0.72" transform="translate(0 -2)"/><g fill="#0b0d26" stroke="#1a2a70" stroke-width="2" stroke-opacity="0.00"><path d="M1238 739 Q1240 690 1282 686 Q1325 690 1327 739 Z"/><ellipse cx="1282" cy="667" rx="17" ry="21"/></g><path d="M1518 661 A22 27 0 0 1 1561 661" fill="none" stroke="#1c3a98" stroke-width="3.3" stroke-opacity="0.39" transform="translate(0 -2)"/><g fill="#0b0d26" stroke="#1a2a70" stroke-width="2" stroke-opacity="0.30"><path d="M1482 757 Q1485 694 1540 689 Q1594 694 1597 757 Z"/><ellipse cx="1540" cy="664" rx="22" ry="27"/></g><path d="M1577 681 A18 22 0 0 1 1612 681" fill="none" stroke="#1c3a98" stroke-width="3.0" stroke-opacity="0.44" transform="translate(0 -2)"/><g fill="#0b0d26" stroke="#1a2a70" stroke-width="2" stroke-opacity="0.30"><path d="M1548 759 Q1550 708 1595 703 Q1639 708 1641 759 Z"/><ellipse cx="1595" cy="683" rx="18" ry="22"/></g><path d="M1632 673 A17 21 0 0 1 1666 673" fill="none" stroke="#3460d8" stroke-width="3.0" stroke-opacity="0.19" transform="translate(0 -2)"/><g fill="#0b0d26" stroke="#1a2a70" stroke-width="2" stroke-opacity="0.15"><path d="M1604 747 Q1606 698 1649 694 Q1692 698 1694 747 Z"/><ellipse cx="1649" cy="675" rx="17" ry="21"/></g><path d="M1758 666 A17 21 0 0 1 1791 666" fill="none" stroke="#2040a8" stroke-width="3.0" stroke-opacity="0.27" transform="translate(0 -2)"/><g fill="#0b0d26" stroke="#1a2a70" stroke-width="2" stroke-opacity="0.50"><path d="M1731 739 Q1733 691 1775 687 Q1816 691 1818 739 Z"/><ellipse cx="1775" cy="668" rx="17" ry="21"/></g><path d="M1810 660 A19 23 0 0 1 1847 660" fill="none" stroke="#1c3a98" stroke-width="3.0" stroke-opacity="0.04" transform="translate(0 -2)"/><g fill="#0b0d26" stroke="#1a2a70" stroke-width="2" stroke-opacity="0.15"><path d="M1780 741 Q1782 688 1829 683 Q1875 688 1877 741 Z"/><ellipse cx="1829" cy="662" rx="19" ry="23"/></g><path d="M1878 679 A22 27 0 0 1 1922 679" fill="none" stroke="#2040a8" stroke-width="3.2" stroke-opacity="0.08" transform="translate(0 -2)"/><g fill="#0b0d26" stroke="#1a2a70" stroke-width="2" stroke-opacity="0.00"><path d="M1843 774 Q1846 711 1900 706 Q1954 711 1957 774 Z"/><ellipse cx="1900" cy="682" rx="22" ry="27"/></g><path d="M1951 677 A17 21 0 0 1 1985 677" fill="none" stroke="#1c3a98" stroke-width="3.0" stroke-opacity="0.05" transform="translate(0 -2)"/><g fill="#0b0d26" stroke="#1a2a70" stroke-width="2" stroke-opacity="0.50"><path d="M1924 751 Q1926 702 1968 698 Q2010 702 2012 751 Z"/><ellipse cx="1968" cy="679" rx="17" ry="21"/></g><path d="M-64 703 A27 33 0 0 1 -11 703" fill="none" stroke="#3460d8" stroke-width="3.9" stroke-opacity="0.04" transform="translate(0 -2)"/><g fill="#090b22" stroke="#182868" stroke-width="2" stroke-opacity="0.00"><path d="M-106 817 Q-103 742 -38 736 Q28 742 31 817 Z"/><ellipse cx="-38" cy="706" rx="27" ry="33"/></g><path d="M1 718 A23 27 0 0 1 45 718" fill="none" stroke="#2040a8" stroke-width="3.3" stroke-opacity="0.07" transform="translate(0 -2)"/><g fill="#090b22" stroke="#182868" stroke-width="2" stroke-opacity="0.00"><path d="M-35 814 Q-32 751 23 745 Q78 751 81 814 Z"/><ellipse cx="23" cy="721" rx="23" ry="27"/></g><path d="M160 706 A27 33 0 0 1 213 706" fill="none" stroke="#2040a8" stroke-width="4.0" stroke-opacity="0.14" transform="translate(0 -2)"/><g fill="#090b22" stroke="#182868" stroke-width="2" stroke-opacity="0.00"><path d="M117 823 Q120 746 187 740 Q254 746 257 823 Z"/><ellipse cx="187" cy="710" rx="27" ry="33"/></g><path d="M229 702 A24 29 0 0 1 274 702" fill="none" stroke="#1c3a98" stroke-width="3.4" stroke-opacity="0.27" transform="translate(0 -2)"/><g fill="#090b22" stroke="#182868" stroke-width="2" stroke-opacity="0.30"><path d="M191 802 Q194 736 251 731 Q309 736 312 802 Z"/><ellipse cx="251" cy="705" rx="24" ry="29"/></g><path d="M390 719 A25 30 0 0 1 438 719" fill="none" stroke="#1c3a98" stroke-width="3.6" stroke-opacity="0.39" transform="translate(0 -2)"/><g fill="#090b22" stroke="#182868" stroke-width="2" stroke-opacity="0.00"><path d="M350 825 Q353 756 414 750 Q474 756 477 825 Z"/><ellipse cx="414" cy="722" rx="25" ry="30"/></g><path d="M474 718 A22 27 0 0 1 518 718" fill="none" stroke="#2040a8" stroke-width="3.3" stroke-opacity="0.56" transform="translate(0 -2)"/><g fill="#090b22" stroke="#182868" stroke-width="2" stroke-opacity="0.15"><path d="M439 813 Q441 751 496 745 Q550 751 553 813 Z"/><ellipse cx="496" cy="721" rx="22" ry="27"/></g><path d="M609 704 A25 30 0 0 1 658 704" fill="none" stroke="#1c3a98" stroke-width="3.7" stroke-opacity="0.34" transform="translate(0 -2)"/><g fill="#090b22" stroke="#182868" stroke-width="2" stroke-opacity="0.30"><path d="M570 810 Q573 740 633 734 Q694 740 697 810 Z"/><ellipse cx="633" cy="707" rx="25" ry="30"/></g><path d="M689 708 A24 29 0 0 1 735 708" fill="none" stroke="#2040a8" stroke-width="3.5" stroke-opacity="0.38" transform="translate(0 -2)"/><g fill="#090b22" stroke="#182868" stroke-width="2" stroke-opacity="0.50"><path d="M651 810 Q654 743 712 737 Q770 743 773 810 Z"/><ellipse cx="712" cy="711" rx="24" ry="29"/></g><path d="M755 721 A27 33 0 0 1 808 721" fill="none" stroke="#3460d8" stroke-width="4.0" stroke-opacity="0.41" transform="translate(0 -2)"/><g fill="#090b22" stroke="#182868" stroke-width="2" stroke-opacity="0.50"><path d="M711 838 Q714 761 781 754 Q848 761 852 838 Z"/><ellipse cx="781" cy="724" rx="27" ry="33"/></g><path d="M821 718 A23 29 0 0 1 867 718" fill="none" stroke="#3460d8" stroke-width="3.4" stroke-opacity="0.44" transform="translate(0 -2)"/><g fill="#090b22" stroke="#182868" stroke-width="2" stroke-opacity="0.15"><path d="M784 818 Q786 752 844 747 Q901 752 904 818 Z"/><ellipse cx="844" cy="721" rx="23" ry="29"/></g><path d="M959 707 A24 29 0 0 1 1005 707" fill="none" stroke="#3460d8" stroke-width="3.5" stroke-opacity="0.50" transform="translate(0 -2)"/><g fill="#090b22" stroke="#182868" stroke-width="2" stroke-opacity="0.50"><path d="M921 808 Q924 742 982 736 Q1040 742 1043 808 Z"/><ellipse cx="982" cy="710" rx="24" ry="29"/></g><path d="M1048 708 A24 29 0 0 1 1094 708" fill="none" stroke="#3460d8" stroke-width="3.5" stroke-opacity="0.73" transform="translate(0 -2)"/><g fill="#090b22" stroke="#182868" stroke-width="2" stroke-opacity="0.00"><path d="M1011 809 Q1014 743 1071 737 Q1129 743 1132 809 Z"/><ellipse cx="1071" cy="711" rx="24" ry="29"/></g><path d="M1134 719 A23 29 0 0 1 1180 719" fill="none" stroke="#3460d8" stroke-width="3.4" stroke-opacity="0.17" transform="translate(0 -2)"/><g fill="#090b22" stroke="#182868" stroke-width="2" stroke-opacity="0.15"><path d="M1097 820 Q1100 754 1157 748 Q1214 754 1217 820 Z"/><ellipse cx="1157" cy="722" rx="23" ry="29"/></g><path d="M1211 712 A27 33 0 0 1 1264 712" fill="none" stroke="#2a4cc0" stroke-width="4.0" stroke-opacity="0.61" transform="translate(0 -2)"/><g fill="#090b22" stroke="#182868" stroke-width="2" stroke-opacity="0.00"><path d="M1167 829 Q1171 752 1238 745 Q1305 752 1308 829 Z"/><ellipse cx="1238" cy="715" rx="27" ry="33"/></g><path d="M1293 704 A22 27 0 0 1 1337 704" fill="none" stroke="#3460d8" stroke-width="3.3" stroke-opacity="0.55" transform="translate(0 -2)"/><g fill="#090b22" stroke="#182868" stroke-width="2" stroke-opacity="0.00"><path d="M1258 799 Q1261 737 1315 731 Q1370 737 1372 799 Z"/><ellipse cx="1315" cy="707" rx="22" ry="27"/></g><path d="M1358 708 A28 34 0 0 1 1413 708" fill="none" stroke="#3460d8" stroke-width="4.1" stroke-opacity="0.13" transform="translate(0 -2)"/><g fill="#090b22" stroke="#182868" stroke-width="2" stroke-opacity="0.15"><path d="M1314 828 Q1317 749 1385 742 Q1454 749 1457 828 Z"/><ellipse cx="1385" cy="712" rx="28" ry="34"/></g><path d="M1441 725 A26 32 0 0 1 1492 725" fill="none" stroke="#2040a8" stroke-width="3.8" stroke-opacity="0.55" transform="translate(0 -2)"/><g fill="#090b22" stroke="#182868" stroke-width="2" stroke-opacity="0.30"><path d="M1399 837 Q1403 764 1467 757 Q1531 764 1534 837 Z"/><ellipse cx="1467" cy="729" rx="26" ry="32"/></g><path d="M1511 724 A22 27 0 0 1 1554 724" fill="none" stroke="#3460d8" stroke-width="3.2" stroke-opacity="0.49" transform="translate(0 -2)"/><g fill="#090b22" stroke="#182868" stroke-width="2" stroke-opacity="0.15"><path d="M1476 819 Q1479 757 1533 751 Q1587 757 1590 819 Z"/><ellipse cx="1533" cy="727" rx="22" ry="27"/></g><path d="M1598 718 A24 29 0 0 1 1644 718" fill="none" stroke="#3460d8" stroke-width="3.4" stroke-opacity="0.21" transform="translate(0 -2)"/><g fill="#090b22" stroke="#182868" stroke-width="2" stroke-opacity="0.30"><path d="M1560 819 Q1563 752 1621 747 Q1678 752 1681 819 Z"/><ellipse cx="1621" cy="721" rx="24" ry="29"/></g><path d="M1680 714 A22 27 0 0 1 1723 714" fill="none" stroke="#2040a8" stroke-width="3.3" stroke-opacity="0.27" transform="translate(0 -2)"/><g fill="#090b22" stroke="#182868" stroke-width="2" stroke-opacity="0.00"><path d="M1645 809 Q1647 747 1702 741 Q1756 747 1759 809 Z"/><ellipse cx="1702" cy="717" rx="22" ry="27"/></g><path d="M1843 714 A21 26 0 0 1 1884 714" fill="none" stroke="#3460d8" stroke-width="3.1" stroke-opacity="0.19" transform="translate(0 -2)"/><g fill="#090b22" stroke="#182868" stroke-width="2" stroke-opacity="0.00"><path d="M1810 804 Q1812 745 1864 739 Q1915 745 1918 804 Z"/><ellipse cx="1864" cy="716" rx="21" ry="26"/></g><path d="M1996 714 A22 27 0 0 1 2039 714" fill="none" stroke="#1c3a98" stroke-width="3.2" stroke-opacity="0.03" transform="translate(0 -2)"/><g fill="#090b22" stroke="#182868" stroke-width="2" stroke-opacity="0.50"><path d="M1961 807 Q1964 746 2017 740 Q2071 746 2074 807 Z"/><ellipse cx="2017" cy="716" rx="22" ry="27"/></g><path d="M-40 766 A32 39 0 0 1 22 766" fill="none" stroke="#2040a8" stroke-width="4.6" stroke-opacity="0.11" transform="translate(0 -2)"/><g fill="#07091c" stroke="#152460" stroke-width="2" stroke-opacity="0.00"><path d="M-91 902 Q-87 813 -9 805 Q68 813 72 902 Z"/><ellipse cx="-9" cy="770" rx="32" ry="39"/></g><path d="M70 768 A27 33 0 0 1 122 768" fill="none" stroke="#3460d8" stroke-width="3.9" stroke-opacity="0.20" transform="translate(0 -2)"/><g fill="#07091c" stroke="#152460" stroke-width="2" stroke-opacity="0.00"><path d="M27 882 Q31 807 96 800 Q161 807 164 882 Z"/><ellipse cx="96" cy="771" rx="27" ry="33"/></g><path d="M172 761 A33 40 0 0 1 236 761" fill="none" stroke="#2040a8" stroke-width="4.8" stroke-opacity="0.30" transform="translate(0 -2)"/><g fill="#07091c" stroke="#152460" stroke-width="2" stroke-opacity="0.50"><path d="M120 902 Q124 810 204 802 Q284 810 288 902 Z"/><ellipse cx="204" cy="765" rx="33" ry="40"/></g><path d="M263 759 A27 33 0 0 1 317 759" fill="none" stroke="#2040a8" stroke-width="4.0" stroke-opacity="0.38" transform="translate(0 -2)"/><g fill="#07091c" stroke="#152460" stroke-width="2" stroke-opacity="0.15"><path d="M220 876 Q223 799 290 792 Q357 799 360 876 Z"/><ellipse cx="290" cy="762" rx="27" ry="33"/></g><path d="M351 754 A28 35 0 0 1 407 754" fill="none" stroke="#2a4cc0" stroke-width="4.2" stroke-opacity="0.37" transform="translate(0 -2)"/><g fill="#07091c" stroke="#152460" stroke-width="2" stroke-opacity="0.30"><path d="M306 875 Q310 796 379 789 Q448 796 452 875 Z"/><ellipse cx="379" cy="758" rx="28" ry="35"/></g><path d="M456 766 A28 34 0 0 1 510 766" fill="none" stroke="#1c3a98" stroke-width="4.1" stroke-opacity="0.55" transform="translate(0 -2)"/><g fill="#07091c" stroke="#152460" stroke-width="2" stroke-opacity="0.00"><path d="M412 884 Q416 806 483 800 Q551 806 554 884 Z"/><ellipse cx="483" cy="769" rx="28" ry="34"/></g><path d="M633 767 A33 40 0 0 1 697 767" fill="none" stroke="#1c3a98" stroke-width="4.8" stroke-opacity="0.36" transform="translate(0 -2)"/><g fill="#07091c" stroke="#152460" stroke-width="2" stroke-opacity="0.30"><path d="M581 907 Q585 815 665 807 Q745 815 749 907 Z"/><ellipse cx="665" cy="771" rx="33" ry="40"/></g><path d="M735 778 A33 41 0 0 1 800 778" fill="none" stroke="#3460d8" stroke-width="4.9" stroke-opacity="0.81" transform="translate(0 -2)"/><g fill="#07091c" stroke="#152460" stroke-width="2" stroke-opacity="0.30"><path d="M682 921 Q686 827 767 819 Q849 827 853 921 Z"/><ellipse cx="767" cy="782" rx="33" ry="41"/></g><path d="M846 765 A30 36 0 0 1 904 765" fill="none" stroke="#2a4cc0" stroke-width="4.3" stroke-opacity="0.91" transform="translate(0 -2)"/><g fill="#07091c" stroke="#152460" stroke-width="2" stroke-opacity="0.00"><path d="M799 891 Q803 808 875 801 Q948 808 951 891 Z"/><ellipse cx="875" cy="768" rx="30" ry="36"/></g><path d="M948 760 A29 36 0 0 1 1005 760" fill="none" stroke="#2040a8" stroke-width="4.3" stroke-opacity="0.20" transform="translate(0 -2)"/><g fill="#07091c" stroke="#152460" stroke-width="2" stroke-opacity="0.00"><path d="M901 886 Q905 803 977 796 Q1049 803 1052 886 Z"/><ellipse cx="977" cy="764" rx="29" ry="36"/></g><path d="M1059 779 A30 37 0 0 1 1118 779" fill="none" stroke="#1c3a98" stroke-width="4.4" stroke-opacity="0.72" transform="translate(0 -2)"/><g fill="#07091c" stroke="#152460" stroke-width="2" stroke-opacity="0.30"><path d="M1011 907 Q1015 823 1089 816 Q1162 823 1166 907 Z"/><ellipse cx="1089" cy="783" rx="30" ry="37"/></g><path d="M1154 757 A32 39 0 0 1 1217 757" fill="none" stroke="#2040a8" stroke-width="4.7" stroke-opacity="0.16" transform="translate(0 -2)"/><g fill="#07091c" stroke="#152460" stroke-width="2" stroke-opacity="0.00"><path d="M1104 893 Q1107 804 1185 796 Q1263 804 1267 893 Z"/><ellipse cx="1185" cy="761" rx="32" ry="39"/></g><path d="M1260 779 A32 39 0 0 1 1322 779" fill="none" stroke="#1c3a98" stroke-width="4.6" stroke-opacity="0.57" transform="translate(0 -2)"/><g fill="#07091c" stroke="#152460" stroke-width="2" stroke-opacity="0.15"><path d="M1210 914 Q1214 825 1291 818 Q1368 825 1372 914 Z"/><ellipse cx="1291" cy="783" rx="32" ry="39"/></g><path d="M1442 771 A30 37 0 0 1 1501 771" fill="none" stroke="#3460d8" stroke-width="4.5" stroke-opacity="0.11" transform="translate(0 -2)"/><g fill="#07091c" stroke="#152460" stroke-width="2" stroke-opacity="0.00"><path d="M1394 901 Q1398 816 1472 808 Q1546 816 1550 901 Z"/><ellipse cx="1472" cy="775" rx="30" ry="37"/></g><path d="M1544 779 A31 38 0 0 1 1604 779" fill="none" stroke="#2a4cc0" stroke-width="4.5" stroke-opacity="0.46" transform="translate(0 -2)"/><g fill="#07091c" stroke="#152460" stroke-width="2" stroke-opacity="0.30"><path d="M1495 910 Q1499 824 1574 816 Q1650 824 1653 910 Z"/><ellipse cx="1574" cy="782" rx="31" ry="38"/></g><path d="M1642 768 A34 42 0 0 1 1708 768" fill="none" stroke="#3460d8" stroke-width="5.0" stroke-opacity="0.07" transform="translate(0 -2)"/><g fill="#07091c" stroke="#152460" stroke-width="2" stroke-opacity="0.30"><path d="M1588 913 Q1592 818 1675 809 Q1758 818 1762 913 Z"/><ellipse cx="1675" cy="772" rx="34" ry="42"/></g><path d="M1837 767 A28 34 0 0 1 1893 767" fill="none" stroke="#2a4cc0" stroke-width="4.1" stroke-opacity="0.10" transform="translate(0 -2)"/><g fill="#07091c" stroke="#152460" stroke-width="2" stroke-opacity="0.00"><path d="M1793 888 Q1796 809 1865 802 Q1934 809 1937 888 Z"/><ellipse cx="1865" cy="771" rx="28" ry="34"/></g><path d="M1915 775 A29 35 0 0 1 1971 775" fill="none" stroke="#3460d8" stroke-width="4.2" stroke-opacity="0.02" transform="translate(0 -2)"/><g fill="#07091c" stroke="#152460" stroke-width="2" stroke-opacity="0.00"><path d="M1870 897 Q1874 816 1943 810 Q2013 816 2016 897 Z"/><ellipse cx="1943" cy="778" rx="29" ry="35"/></g><path d="M1997 774 A28 34 0 0 1 2051 774" fill="none" stroke="#2a4cc0" stroke-width="4.1" stroke-opacity="0.05" transform="translate(0 -2)"/><g fill="#07091c" stroke="#152460" stroke-width="2" stroke-opacity="0.50"><path d="M1953 892 Q1956 815 2024 808 Q2091 815 2095 892 Z"/><ellipse cx="2024" cy="777" rx="28" ry="34"/></g><path d="M-58 828 A44 54 0 0 1 28 828" fill="none" stroke="#2040a8" stroke-width="6.4" stroke-opacity="0.10" transform="translate(0 -2)"/><g fill="#060818" stroke="#122058" stroke-width="2" stroke-opacity="0.00"><path d="M-128 1016 Q-123 893 -15 882 Q92 893 97 1016 Z"/><ellipse cx="-15" cy="834" rx="44" ry="54"/></g><path d="M57 839 A43 52 0 0 1 141 839" fill="none" stroke="#3460d8" stroke-width="6.3" stroke-opacity="0.20" transform="translate(0 -2)"/><g fill="#060818" stroke="#122058" stroke-width="2" stroke-opacity="0.15"><path d="M-11 1022 Q-6 902 99 891 Q204 902 209 1022 Z"/><ellipse cx="99" cy="844" rx="43" ry="52"/></g><path d="M188 824 A35 43 0 0 1 258 824" fill="none" stroke="#1c3a98" stroke-width="5.2" stroke-opacity="0.32" transform="translate(0 -2)"/><g fill="#060818" stroke="#122058" stroke-width="2" stroke-opacity="0.15"><path d="M132 975 Q136 876 223 867 Q309 876 314 975 Z"/><ellipse cx="223" cy="828" rx="35" ry="43"/></g><path d="M286 825 A45 55 0 0 1 373 825" fill="none" stroke="#2a4cc0" stroke-width="6.6" stroke-opacity="0.21" transform="translate(0 -2)"/><g fill="#060818" stroke="#122058" stroke-width="2" stroke-opacity="0.50"><path d="M215 1016 Q220 891 330 880 Q439 891 444 1016 Z"/><ellipse cx="330" cy="831" rx="45" ry="55"/></g><path d="M445 825 A35 43 0 0 1 514 825" fill="none" stroke="#3460d8" stroke-width="5.2" stroke-opacity="0.11" transform="translate(0 -2)"/><g fill="#060818" stroke="#122058" stroke-width="2" stroke-opacity="0.00"><path d="M389 976 Q393 877 479 868 Q566 877 570 976 Z"/><ellipse cx="479" cy="830" rx="35" ry="43"/></g><path d="M566 844 A42 51 0 0 1 648 844" fill="none" stroke="#2a4cc0" stroke-width="6.2" stroke-opacity="0.33" transform="translate(0 -2)"/><g fill="#060818" stroke="#122058" stroke-width="2" stroke-opacity="0.50"><path d="M499 1023 Q504 905 607 895 Q710 905 715 1023 Z"/><ellipse cx="607" cy="849" rx="42" ry="51"/></g><path d="M683 828 A42 51 0 0 1 765 828" fill="none" stroke="#2a4cc0" stroke-width="6.2" stroke-opacity="0.39" transform="translate(0 -2)"/><g fill="#060818" stroke="#122058" stroke-width="2" stroke-opacity="0.50"><path d="M616 1008 Q621 890 724 880 Q827 890 832 1008 Z"/><ellipse cx="724" cy="833" rx="42" ry="51"/></g><path d="M836 826 A35 43 0 0 1 904 826" fill="none" stroke="#1c3a98" stroke-width="5.1" stroke-opacity="0.45" transform="translate(0 -2)"/><g fill="#060818" stroke="#122058" stroke-width="2" stroke-opacity="0.15"><path d="M780 975 Q785 877 870 868 Q956 877 960 975 Z"/><ellipse cx="870" cy="830" rx="35" ry="43"/></g><path d="M979 822 A36 44 0 0 1 1049 822" fill="none" stroke="#3460d8" stroke-width="5.3" stroke-opacity="0.19" transform="translate(0 -2)"/><g fill="#060818" stroke="#122058" stroke-width="2" stroke-opacity="0.00"><path d="M921 976 Q926 875 1014 866 Q1102 875 1107 976 Z"/><ellipse cx="1014" cy="826" rx="36" ry="44"/></g><path d="M1101 833 A43 52 0 0 1 1184 833" fill="none" stroke="#1c3a98" stroke-width="6.2" stroke-opacity="0.17" transform="translate(0 -2)"/><g fill="#060818" stroke="#122058" stroke-width="2" stroke-opacity="0.30"><path d="M1033 1015 Q1039 895 1143 885 Q1247 895 1252 1015 Z"/><ellipse cx="1143" cy="838" rx="43" ry="52"/></g><path d="M1231 832 A44 53 0 0 1 1316 832" fill="none" stroke="#2a4cc0" stroke-width="6.4" stroke-opacity="0.36" transform="translate(0 -2)"/><g fill="#060818" stroke="#122058" stroke-width="2" stroke-opacity="0.15"><path d="M1161 1020 Q1167 897 1274 886 Q1381 897 1386 1020 Z"/><ellipse cx="1274" cy="838" rx="44" ry="53"/></g><path d="M1344 846 A42 51 0 0 1 1426 846" fill="none" stroke="#1c3a98" stroke-width="6.2" stroke-opacity="0.63" transform="translate(0 -2)"/><g fill="#060818" stroke="#122058" stroke-width="2" stroke-opacity="0.00"><path d="M1277 1026 Q1282 908 1385 897 Q1488 908 1493 1026 Z"/><ellipse cx="1385" cy="851" rx="42" ry="51"/></g><path d="M1472 827 A46 56 0 0 1 1562 827" fill="none" stroke="#2a4cc0" stroke-width="6.7" stroke-opacity="0.10" transform="translate(0 -2)"/><g fill="#060818" stroke="#122058" stroke-width="2" stroke-opacity="0.30"><path d="M1399 1024 Q1405 895 1517 884 Q1629 895 1635 1024 Z"/><ellipse cx="1517" cy="833" rx="46" ry="56"/></g><path d="M1614 840 A45 55 0 0 1 1702 840" fill="none" stroke="#3460d8" stroke-width="6.6" stroke-opacity="0.19" transform="translate(0 -2)"/><g fill="#060818" stroke="#122058" stroke-width="2" stroke-opacity="0.00"><path d="M1542 1033 Q1547 906 1658 895 Q1768 906 1774 1033 Z"/><ellipse cx="1658" cy="845" rx="45" ry="55"/></g><path d="M1750 838 A47 57 0 0 1 1841 838" fill="none" stroke="#2040a8" stroke-width="6.8" stroke-opacity="0.20" transform="translate(0 -2)"/><g fill="#060818" stroke="#122058" stroke-width="2" stroke-opacity="0.15"><path d="M1676 1036 Q1682 906 1795 894 Q1909 906 1914 1036 Z"/><ellipse cx="1795" cy="843" rx="47" ry="57"/></g><path d="M1991 822 A45 55 0 0 1 2079 822" fill="none" stroke="#2040a8" stroke-width="6.6" stroke-opacity="0.02" transform="translate(0 -2)"/><g fill="#060818" stroke="#122058" stroke-width="2" stroke-opacity="0.00"><path d="M1919 1015 Q1924 888 2035 877 Q2145 888 2151 1015 Z"/><ellipse cx="2035" cy="827" rx="45" ry="55"/></g><path d="M-58 910 A50 62 0 0 1 41 910" fill="none" stroke="#2040a8" stroke-width="7.4" stroke-opacity="0.05" transform="translate(0 -2)"/><g fill="#050714" stroke="#101c50" stroke-width="2" stroke-opacity="0.50"><path d="M-138 1126 Q-132 984 -9 972 Q115 984 121 1126 Z"/><ellipse cx="-9" cy="916" rx="50" ry="62"/></g><path d="M110 920 A56 69 0 0 1 219 920" fill="none" stroke="#2040a8" stroke-width="8.2" stroke-opacity="0.26" transform="translate(0 -2)"/><g fill="#050714" stroke="#101c50" stroke-width="2" stroke-opacity="0.30"><path d="M21 1159 Q28 1002 165 988 Q302 1002 309 1159 Z"/><ellipse cx="165" cy="926" rx="56" ry="69"/></g><path d="M286 914 A54 66 0 0 1 392 914" fill="none" stroke="#1c3a98" stroke-width="7.9" stroke-opacity="0.08" transform="translate(0 -2)"/><g fill="#050714" stroke="#101c50" stroke-width="2" stroke-opacity="0.00"><path d="M200 1146 Q206 994 339 980 Q471 994 478 1146 Z"/><ellipse cx="339" cy="921" rx="54" ry="66"/></g><path d="M435 917 A49 60 0 0 1 531 917" fill="none" stroke="#3460d8" stroke-width="7.2" stroke-opacity="0.28" transform="translate(0 -2)"/><g fill="#050714" stroke="#101c50" stroke-width="2" stroke-opacity="0.15"><path d="M358 1127 Q364 989 483 977 Q603 989 609 1127 Z"/><ellipse cx="483" cy="923" rx="49" ry="60"/></g><path d="M619 913 A49 60 0 0 1 714 913" fill="none" stroke="#2040a8" stroke-width="7.2" stroke-opacity="0.14" transform="translate(0 -2)"/><g fill="#050714" stroke="#101c50" stroke-width="2" stroke-opacity="0.50"><path d="M541 1122 Q547 985 666 973 Q786 985 792 1122 Z"/><ellipse cx="666" cy="919" rx="49" ry="60"/></g><path d="M752 924 A47 58 0 0 1 844 924" fill="none" stroke="#2a4cc0" stroke-width="6.9" stroke-opacity="0.67" transform="translate(0 -2)"/><g fill="#050714" stroke="#101c50" stroke-width="2" stroke-opacity="0.50"><path d="M677 1125 Q682 993 798 981 Q913 993 919 1125 Z"/><ellipse cx="798" cy="929" rx="47" ry="58"/></g><path d="M894 930 A53 65 0 0 1 998 930" fill="none" stroke="#1c3a98" stroke-width="7.8" stroke-opacity="0.19" transform="translate(0 -2)"/><g fill="#050714" stroke="#101c50" stroke-width="2" stroke-opacity="0.30"><path d="M809 1158 Q816 1008 946 995 Q1076 1008 1083 1158 Z"/><ellipse cx="946" cy="937" rx="53" ry="65"/></g><path d="M1079 905 A54 66 0 0 1 1185 905" fill="none" stroke="#3460d8" stroke-width="7.9" stroke-opacity="0.86" transform="translate(0 -2)"/><g fill="#050714" stroke="#101c50" stroke-width="2" stroke-opacity="0.00"><path d="M993 1137 Q1000 985 1132 971 Q1264 985 1271 1137 Z"/><ellipse cx="1132" cy="912" rx="54" ry="66"/></g><path d="M1244 926 A50 61 0 0 1 1342 926" fill="none" stroke="#2040a8" stroke-width="7.3" stroke-opacity="0.36" transform="translate(0 -2)"/><g fill="#050714" stroke="#101c50" stroke-width="2" stroke-opacity="0.30"><path d="M1165 1139 Q1171 999 1293 987 Q1415 999 1421 1139 Z"/><ellipse cx="1293" cy="932" rx="50" ry="61"/></g><path d="M1372 910 A59 72 0 0 1 1487 910" fill="none" stroke="#2a4cc0" stroke-width="8.6" stroke-opacity="0.47" transform="translate(0 -2)"/><g fill="#050714" stroke="#101c50" stroke-width="2" stroke-opacity="0.30"><path d="M1278 1162 Q1285 996 1429 982 Q1573 996 1580 1162 Z"/><ellipse cx="1429" cy="917" rx="59" ry="72"/></g><path d="M1545 930 A46 56 0 0 1 1635 930" fill="none" stroke="#3460d8" stroke-width="6.8" stroke-opacity="0.35" transform="translate(0 -2)"/><g fill="#050714" stroke="#101c50" stroke-width="2" stroke-opacity="0.30"><path d="M1472 1128 Q1477 998 1590 987 Q1703 998 1708 1128 Z"/><ellipse cx="1590" cy="936" rx="46" ry="56"/></g><path d="M1671 906 A55 67 0 0 1 1778 906" fill="none" stroke="#3460d8" stroke-width="8.1" stroke-opacity="0.32" transform="translate(0 -2)"/><g fill="#050714" stroke="#101c50" stroke-width="2" stroke-opacity="0.00"><path d="M1583 1142 Q1590 987 1724 974 Q1859 987 1866 1142 Z"/><ellipse cx="1724" cy="913" rx="55" ry="67"/></g><path d="M1836 906 A59 72 0 0 1 1951 906" fill="none" stroke="#2040a8" stroke-width="8.6" stroke-opacity="0.08" transform="translate(0 -2)"/><g fill="#050714" stroke="#101c50" stroke-width="2" stroke-opacity="0.15"><path d="M1743 1157 Q1750 992 1894 978 Q2038 992 2045 1157 Z"/><ellipse cx="1894" cy="913" rx="59" ry="72"/></g><path d="M-71 1008 A61 74 0 0 1 48 1008" fill="none" stroke="#1c3a98" stroke-width="8.9" stroke-opacity="0.10" transform="translate(0 -2)"/><g fill="#04060f" stroke="#0e1a4a" stroke-width="2" stroke-opacity="0.00"><path d="M-168 1269 Q-160 1098 -12 1083 Q137 1098 145 1269 Z"/><ellipse cx="-12" cy="1016" rx="61" ry="74"/></g><path d="M131 1009 A71 87 0 0 1 270 1009" fill="none" stroke="#2040a8" stroke-width="10.4" stroke-opacity="0.06" transform="translate(0 -2)"/><g fill="#04060f" stroke="#0e1a4a" stroke-width="2" stroke-opacity="0.00"><path d="M18 1313 Q26 1113 200 1096 Q374 1113 383 1313 Z"/><ellipse cx="200" cy="1018" rx="71" ry="87"/></g><path d="M330 1011 A63 77 0 0 1 454 1011" fill="none" stroke="#2040a8" stroke-width="9.3" stroke-opacity="0.09" transform="translate(0 -2)"/><g fill="#04060f" stroke="#0e1a4a" stroke-width="2" stroke-opacity="0.30"><path d="M230 1281 Q237 1103 392 1088 Q546 1103 554 1281 Z"/><ellipse cx="392" cy="1018" rx="63" ry="77"/></g><path d="M528 1020 A71 87 0 0 1 667 1020" fill="none" stroke="#2a4cc0" stroke-width="10.4" stroke-opacity="0.66" transform="translate(0 -2)"/><g fill="#04060f" stroke="#0e1a4a" stroke-width="2" stroke-opacity="0.00"><path d="M415 1324 Q424 1124 598 1107 Q771 1124 780 1324 Z"/><ellipse cx="598" cy="1028" rx="71" ry="87"/></g><path d="M726 1009 A66 80 0 0 1 854 1009" fill="none" stroke="#2a4cc0" stroke-width="9.6" stroke-opacity="0.42" transform="translate(0 -2)"/><g fill="#04060f" stroke="#0e1a4a" stroke-width="2" stroke-opacity="0.00"><path d="M622 1289 Q630 1105 790 1089 Q950 1105 958 1289 Z"/><ellipse cx="790" cy="1017" rx="66" ry="80"/></g><path d="M944 1004 A59 72 0 0 1 1059 1004" fill="none" stroke="#2040a8" stroke-width="8.6" stroke-opacity="0.98" transform="translate(0 -2)"/><g fill="#04060f" stroke="#0e1a4a" stroke-width="2" stroke-opacity="0.30"><path d="M851 1255 Q859 1090 1002 1076 Q1145 1090 1152 1255 Z"/><ellipse cx="1002" cy="1011" rx="59" ry="72"/></g><path d="M1143 1011 A60 73 0 0 1 1260 1011" fill="none" stroke="#1c3a98" stroke-width="8.8" stroke-opacity="0.79" transform="translate(0 -2)"/><g fill="#04060f" stroke="#0e1a4a" stroke-width="2" stroke-opacity="0.00"><path d="M1047 1268 Q1055 1099 1201 1084 Q1348 1099 1356 1268 Z"/><ellipse cx="1201" cy="1018" rx="60" ry="73"/></g><path d="M1363 1008 A65 79 0 0 1 1489 1008" fill="none" stroke="#2a4cc0" stroke-width="9.5" stroke-opacity="0.59" transform="translate(0 -2)"/><g fill="#04060f" stroke="#0e1a4a" stroke-width="2" stroke-opacity="0.15"><path d="M1260 1284 Q1268 1103 1426 1087 Q1583 1103 1591 1284 Z"/><ellipse cx="1426" cy="1016" rx="65" ry="79"/></g><path d="M1548 999 A57 70 0 0 1 1659 999" fill="none" stroke="#3460d8" stroke-width="8.3" stroke-opacity="0.43" transform="translate(0 -2)"/><g fill="#04060f" stroke="#0e1a4a" stroke-width="2" stroke-opacity="0.00"><path d="M1457 1242 Q1464 1083 1603 1069 Q1742 1083 1749 1242 Z"/><ellipse cx="1603" cy="1006" rx="57" ry="70"/></g><path d="M1728 1000 A64 78 0 0 1 1854 1000" fill="none" stroke="#1c3a98" stroke-width="9.4" stroke-opacity="0.21" transform="translate(0 -2)"/><g fill="#04060f" stroke="#0e1a4a" stroke-width="2" stroke-opacity="0.00"><path d="M1626 1274 Q1634 1094 1791 1078 Q1948 1094 1956 1274 Z"/><ellipse cx="1791" cy="1007" rx="64" ry="78"/></g><path d="M1940 1025 A68 83 0 0 1 2072 1025" fill="none" stroke="#2040a8" stroke-width="9.9" stroke-opacity="0.05" transform="translate(0 -2)"/><g fill="#04060f" stroke="#0e1a4a" stroke-width="2" stroke-opacity="0.50"><path d="M1832 1314 Q1841 1124 2006 1107 Q2171 1124 2179 1314 Z"/><ellipse cx="2006" cy="1033" rx="68" ry="83"/></g><path d="M-97 1115 A69 85 0 0 1 38 1115" fill="none" stroke="#2040a8" stroke-width="10.1" stroke-opacity="0.04" transform="translate(0 -2)"/><g fill="#03050d" stroke="#0c1844" stroke-width="2" stroke-opacity="0.50"><path d="M-207 1411 Q-198 1216 -29 1200 Q140 1216 148 1411 Z"/><ellipse cx="-29" cy="1123" rx="69" ry="85"/></g><path d="M148 1107 A79 96 0 0 1 302 1107" fill="none" stroke="#1c3a98" stroke-width="11.5" stroke-opacity="0.06" transform="translate(0 -2)"/><g fill="#03050d" stroke="#0c1844" stroke-width="2" stroke-opacity="0.50"><path d="M24 1443 Q33 1222 225 1203 Q417 1222 427 1443 Z"/><ellipse cx="225" cy="1116" rx="79" ry="96"/></g><path d="M350 1115 A78 95 0 0 1 502 1115" fill="none" stroke="#1c3a98" stroke-width="11.4" stroke-opacity="0.10" transform="translate(0 -2)"/><g fill="#03050d" stroke="#0c1844" stroke-width="2" stroke-opacity="0.00"><path d="M226 1449 Q235 1229 426 1210 Q617 1229 626 1449 Z"/><ellipse cx="426" cy="1124" rx="78" ry="95"/></g><path d="M628 1110 A70 85 0 0 1 764 1110" fill="none" stroke="#1c3a98" stroke-width="10.2" stroke-opacity="0.75" transform="translate(0 -2)"/><g fill="#03050d" stroke="#0c1844" stroke-width="2" stroke-opacity="0.00"><path d="M518 1408 Q526 1213 696 1196 Q866 1213 875 1408 Z"/><ellipse cx="696" cy="1119" rx="70" ry="85"/></g><path d="M832 1098 A69 84 0 0 1 966 1098" fill="none" stroke="#3460d8" stroke-width="10.1" stroke-opacity="0.74" transform="translate(0 -2)"/><g fill="#03050d" stroke="#0c1844" stroke-width="2" stroke-opacity="0.50"><path d="M723 1392 Q731 1199 899 1182 Q1067 1199 1075 1392 Z"/><ellipse cx="899" cy="1107" rx="69" ry="84"/></g><path d="M1036 1105 A70 85 0 0 1 1173 1105" fill="none" stroke="#2040a8" stroke-width="10.2" stroke-opacity="0.71" transform="translate(0 -2)"/><g fill="#03050d" stroke="#0c1844" stroke-width="2" stroke-opacity="0.00"><path d="M925 1403 Q934 1207 1104 1190 Q1275 1207 1283 1403 Z"/><ellipse cx="1104" cy="1113" rx="70" ry="85"/></g><path d="M1272 1111 A81 99 0 0 1 1430 1111" fill="none" stroke="#3460d8" stroke-width="11.9" stroke-opacity="0.13" transform="translate(0 -2)"/><g fill="#03050d" stroke="#0c1844" stroke-width="2" stroke-opacity="0.30"><path d="M1143 1457 Q1153 1230 1351 1210 Q1549 1230 1559 1457 Z"/><ellipse cx="1351" cy="1121" rx="81" ry="99"/></g><path d="M1531 1112 A87 106 0 0 1 1701 1112" fill="none" stroke="#2040a8" stroke-width="12.8" stroke-opacity="0.33" transform="translate(0 -2)"/><g fill="#03050d" stroke="#0c1844" stroke-width="2" stroke-opacity="0.30"><path d="M1392 1484 Q1403 1240 1616 1218 Q1829 1240 1839 1484 Z"/><ellipse cx="1616" cy="1123" rx="87" ry="106"/></g><path d="M1811 1106 A85 104 0 0 1 1978 1106" fill="none" stroke="#3460d8" stroke-width="12.5" stroke-opacity="0.08" transform="translate(0 -2)"/><g fill="#03050d" stroke="#0c1844" stroke-width="2" stroke-opacity="0.30"><path d="M1676 1471 Q1686 1231 1894 1210 Q2103 1231 2113 1471 Z"/><ellipse cx="1894" cy="1117" rx="85" ry="104"/></g>
<g fill="none"><path d="M715 620 l8 110" stroke="#090b20" stroke-width="14" stroke-linecap="round"/><path d="M708 604 l3 14 M715 600 l0 16 M722 604 l-3 14" stroke="#090b20" stroke-width="4" stroke-linecap="round"/><path d="M740 655 l-8 80" stroke="#090b20" stroke-width="14" stroke-linecap="round"/><path d="M733 639 l3 14 M740 635 l0 16 M747 639 l-3 14" stroke="#090b20" stroke-width="4" stroke-linecap="round"/><path d="M795 605 l-10 130" stroke="#090b20" stroke-width="14" stroke-linecap="round"/><path d="M788 589 l3 14 M795 585 l0 16 M802 589 l-3 14" stroke="#090b20" stroke-width="4" stroke-linecap="round"/><path d="M905 592 l14 140" stroke="#090b20" stroke-width="14" stroke-linecap="round"/><path d="M898 576 l3 14 M905 572 l0 16 M912 576 l-3 14" stroke="#090b20" stroke-width="4" stroke-linecap="round"/><path d="M960 615 l-12 120" stroke="#090b20" stroke-width="14" stroke-linecap="round"/><path d="M953 599 l3 14 M960 595 l0 16 M967 599 l-3 14" stroke="#090b20" stroke-width="4" stroke-linecap="round"/><path d="M1015 625 l10 110" stroke="#090b20" stroke-width="14" stroke-linecap="round"/><path d="M1008 609 l3 14 M1015 605 l0 16 M1022 609 l-3 14" stroke="#090b20" stroke-width="4" stroke-linecap="round"/><path d="M1105 600 l-6 140" stroke="#090b20" stroke-width="14" stroke-linecap="round"/><path d="M1098 584 l3 14 M1105 580 l0 16 M1112 584 l-3 14" stroke="#090b20" stroke-width="4" stroke-linecap="round"/><path d="M1140 565 l-14 170" stroke="#090b20" stroke-width="14" stroke-linecap="round"/><path d="M1133 549 l3 14 M1140 545 l0 16 M1147 549 l-3 14" stroke="#090b20" stroke-width="4" stroke-linecap="round"/><path d="M1170 575 l12 160" stroke="#090b20" stroke-width="14" stroke-linecap="round"/><path d="M1163 559 l3 14 M1170 555 l0 16 M1177 559 l-3 14" stroke="#090b20" stroke-width="4" stroke-linecap="round"/><path d="M1255 600 l8 120" stroke="#090b20" stroke-width="14" stroke-linecap="round"/><path d="M1248 584 l3 14 M1255 580 l0 16 M1262 584 l-3 14" stroke="#090b20" stroke-width="4" stroke-linecap="round"/><path d="M1290 610 l-10 100" stroke="#090b20" stroke-width="14" stroke-linecap="round"/><path d="M1283 594 l3 14 M1290 590 l0 16 M1297 594 l-3 14" stroke="#090b20" stroke-width="4" stroke-linecap="round"/><path d="M880 640 l18 100" stroke="#090b20" stroke-width="14" stroke-linecap="round"/><path d="M873 624 l3 14 M880 620 l0 16 M887 624 l-3 14" stroke="#090b20" stroke-width="4" stroke-linecap="round"/><path d="M1060 630 l-6 90" stroke="#090b20" stroke-width="14" stroke-linecap="round"/><path d="M1053 614 l3 14 M1060 610 l0 16 M1067 614 l-3 14" stroke="#090b20" stroke-width="4" stroke-linecap="round"/><path d="M1335 630 l6 90" stroke="#090b20" stroke-width="14" stroke-linecap="round"/><path d="M1328 614 l3 14 M1335 610 l0 16 M1342 614 l-3 14" stroke="#090b20" stroke-width="4" stroke-linecap="round"/></g>
</g></defs></svg>
<div id="win">
  <!-- tab strip -->
  <div class="g" style="left:17px;top:17px;width:83px;height:83px;border-radius:24px;background:#868a93"></div>
  <svg class="g" style="left:17px;top:17px" width="83" height="83" viewBox="0 0 83 83"><path d="M31.700 37.300 L41.700 47.300 L51.700 37.300" fill="none" stroke="#2b2d33" stroke-width="4.600"/></svg>
  <div class="chip" style="left:118px;width:106px;background:#643398;color:#b2a6bf">音楽</div>
  <div class="chip" style="left:254px;width:106px;background:#976c12;color:#23211c">学校</div>
  <div class="chip" style="left:390px;width:212px;background:#1f4f93;color:#a9b9cf">ソーシャル</div>
  <div class="uline" style="left:124px;width:94px;background:#643398"></div>
  <div class="uline" style="left:259px;width:95px;background:#976c12"></div>
  <div class="uline" style="left:395px;width:201px;background:#1f4f93"></div>
  <svg class="g" style="left:0;top:0" width="2842" height="120" viewBox="0 0 2842 120">
    <path d="M613 118 A30 30 0 0 0 643 88 L643 46 A28 28 0 0 1 671 18 L1263.5 18 A28 28 0 0 1 1291.5 46 L1291.5 88 A30 30 0 0 0 1321.5 118 Z" fill="#929395"/>
    <!-- favicon -->
    <rect x="670" y="44" width="41" height="29" rx="7.5" fill="#9b1111"/>
    <path d="M686.5 51.5 L698 58.5 L686.5 65.5 Z" fill="#a9a9ab"/>
    <!-- tab close -->
    <path d="M1234.6 49 L1254.6 69 M1254.6 49 L1234.6 69" stroke="#1f2023" stroke-width="5" fill="none"/>
    <!-- new tab -->
    <path d="M1342.5 59 H1369.5 M1356 45.5 V72.5" stroke="#3b3e44" stroke-width="5" fill="none"/>
    <!-- window controls -->
    <path d="M2529 58.6 H2565" stroke="#1c4891" stroke-width="6.5" fill="none"/>
    <rect x="2651.8" y="43" width="31.2" height="30.8" stroke="#1c4891" stroke-width="6" fill="none"/>
    <path d="M2768 43.7 L2798.6 74.3 M2798.6 43.7 L2768 74.3" stroke="#1c4891" stroke-width="6" fill="none"/>
  </svg>
  <div id="tabtitle">YouTube</div>
  <!-- toolbar -->
  <div id="toolbar"></div>
  <div id="omni"></div>
  <div id="siteinfo"></div>
  <div id="url">youtube.com<span>/watch/</span></div>
  <svg class="g" style="left:0;top:118px" width="2842" height="115" viewBox="0 118 2842 115">
    <!-- back -->
    <path d="M70 174.3 H41 M55.5 158.4 L39.6 174.3 L55.5 190.2" stroke="#38393c" stroke-width="3.600" fill="none" stroke-linejoin="miter"/>
    <!-- forward -->
    <path d="M126.5 174.3 H155.5 M141 158.4 L156.9 174.3 L141 190.2" stroke="#747577" stroke-width="3.600" fill="none"/>
    <!-- reload -->
    <path d="M245.6 180.5 A14.6 14.6 0 1 1 241.5 163.4" stroke="#38393c" stroke-width="3.600" fill="none"/>
    <path d="M246 158.5 V171 H233.5" stroke="#38393c" stroke-width="3.600" fill="none"/>
    <!-- tune icon -->
    <circle cx="326.5" cy="166" r="4.6" stroke="#25272b" stroke-width="3.6" fill="none"/>
    <path d="M337 166 H350.5" stroke="#25272b" stroke-width="3.6" fill="none"/>
    <circle cx="345.5" cy="183" r="4.6" stroke="#25272b" stroke-width="3.6" fill="none"/>
    <path d="M321.5 183 H335" stroke="#25272b" stroke-width="3.6" fill="none"/>
    <!-- star -->
    <path d="M2441 160.5 L2445.9 171.3 L2457.7 172.6 L2448.9 180.6 L2451.3 192.2 L2441 186.3 L2430.7 192.2 L2433.1 180.6 L2424.3 172.6 L2436.1 171.3 Z" stroke="#3a3b3e" stroke-width="3.6" fill="none" stroke-linejoin="miter"/>
    <!-- puzzle -->
    <path d="M2542.8 159.500 H2573.200 V190.200 H2542.800 V181.200 A6.200 6.200 0 0 0 2542.800 169.200 Z" stroke="#3a3b3e" stroke-width="4" fill="none" stroke-linejoin="round"/>
    <path d="M2551.300 158.500 A6.500 6.500 0 0 1 2564.300 158.500 Z" fill="#3a3b3e"/>
    <path d="M2574.200 168.800 A6.500 6.500 0 0 1 2574.200 181.800 Z" fill="#3a3b3e"/>
    </svg>
  <!-- avatar -->
  <svg class="g" style="left:2756px;top:150px" width="50" height="50" viewBox="0 0 50 50">
    <defs><clipPath id="avc"><circle cx="25.300" cy="25.300" r="24.600"/></clipPath></defs>
    <g clip-path="url(#avc)">
      <rect width="50" height="50" fill="#939497"/>
      <path d="M2 36 L4 14 L12 6 L15 34 Z" fill="#87898c"/>
      <path d="M35 34 L37 6 L46 12 L48 34 Z" fill="#8a8c8f"/>
      <path d="M0 50 Q3 35 18 32 L33 32 Q47 35 50 50 Z" fill="#8f9093"/>
      <path d="M20.500 30 L30.500 30 L27.800 50 L23.800 50 Z" fill="#5c3f39"/>
      <ellipse cx="25.500" cy="22" rx="9.600" ry="12" fill="#5a3c35"/>
      <path d="M14.800 19 Q13.500 2.500 25.500 2.500 Q37.500 2.500 36.200 19 Q34.500 9.500 25.500 9.500 Q16.500 9.500 14.800 19 Z" fill="#26262a"/>
      <ellipse cx="21.500" cy="19" rx="1.600" ry="1" fill="#2a1c1a"/>
      <ellipse cx="29.500" cy="19" rx="1.600" ry="1" fill="#2a1c1a"/>
      <path d="M21.500 26.500 Q25.500 30.500 29.500 26.500 Q25.500 28 21.500 26.500 Z" fill="#a89a98"/>
    </g>
  </svg>
  <!-- content -->
  <div id="content"></div>
  <svg class="g" style="left:0;top:233px" width="400" height="100" viewBox="0 233 400 100">
    <path d="M46 265.5 H77 M46 276 H77 M46 286.5 H77" stroke="#1d1d1f" stroke-width="2.2" fill="none"/>
    <rect x="123" y="260" width="48.5" height="33.5" rx="8.5" fill="#9b1111"/>
    <path d="M142.5 269 L155.5 276.8 L142.5 284.5 Z" fill="#a5a5a7"/>
  </svg>
  <div id="ytword">YouTube</div>
  <div id="ytsearch"></div>
  <div id="ytsearchbtn"></div>
  <div id="ytph">検索</div>
  <div id="mic"></div>
  <svg class="g" style="left:1860px;top:233px" width="220" height="100" viewBox="1860 233 220 100">
    <circle cx="1899.6" cy="275.5" r="12.6" stroke="#1c1c1e" stroke-width="2.300" fill="none"/>
    <path d="M1908.6 284.5 L1916 291.6" stroke="#1c1c1e" stroke-width="2.300" fill="none"/>
    <rect x="2013" y="262" width="9.6" height="26" rx="4.8" fill="#242426"/>
    <path d="M2007 276 A10.8 10.8 0 0 0 2017.8 287" stroke="#242426" stroke-width="2.2" fill="none"/>
  </svg>
  <!-- video -->
  <div id="video">
    <svg width="1995" height="1131" viewBox="0 0 1995 1131"><use href="#concert"/></svg>
    <div id="scrim"></div>
    <div id="castpill">
      <svg class="abs" style="left:64px;top:36px" width="60" height="50" viewBox="0 0 60 50">
        <path d="M7 11.5 V9.5 A3 3 0 0 1 10 6.5 H48.5 A3 3 0 0 1 51.500 9.500 V39.500 A3 3 0 0 1 48.500 42.500 H36.500" stroke="#f1f1f1" stroke-width="5" fill="none"/>
        <path d="M4.5 37 A8 8 0 0 1 12.500 45 H4.500 Z" fill="#f1f1f1"/>
        <path d="M4.500 28.500 A16.500 16.500 0 0 1 21 45" stroke="#f1f1f1" stroke-width="4.600" fill="none"/>
        <path d="M4.500 19.500 A25.500 25.500 0 0 1 30 45" stroke="#f1f1f1" stroke-width="4.600" fill="none"/>
      </svg>
      <div id="casttext">リビングルームのテレビで再生中</div>
    </div>
  </div>
  <div id="vtitle">ライブ コンサート - パーム スプリングス</div>
  <!-- sidebar skeleton -->
  <div class="th" style="top:602px;height:164px"></div>
  <div class="th" style="top:781px;height:166px"></div>
  <div class="th" style="top:961px;height:166px"></div>
  <div class="th" style="top:1140px;height:170px"></div>
  <div class="th" style="top:1319px;height:166px"></div>
  <div class="th" style="top:1495px;height:166px"></div>
  <!-- row2 -->
  <div class="sk" style="left:2444px;top:785px;width:288px;height:33px"></div>
  <div class="sk" style="left:2444px;top:823px;width:343px;height:33px"></div>
  <div class="sk" style="left:2444px;top:860px;width:153px;height:27px"></div>
  <div class="sk" style="left:2444px;top:891px;width:229px;height:27px"></div>
  <!-- row3 -->
  <div class="sk" style="left:2444px;top:960px;width:288px;height:34px"></div>
  <div class="sk" style="left:2444px;top:998px;width:343px;height:34px"></div>
  <div class="sk" style="left:2444px;top:1039px;width:153px;height:27px"></div>
  <div class="sk" style="left:2444px;top:1073px;width:252px;height:27px"></div>
  <!-- row4 -->
  <div class="sk" style="left:2444px;top:1150px;width:288px;height:33px"></div>
  <div class="sk" style="left:2444px;top:1188px;width:209px;height:26px"></div>
  <!-- row5 -->
  <div class="sk" style="left:2444px;top:1325px;width:355px;height:32px"></div>
  <div class="sk" style="left:2444px;top:1362px;width:308px;height:33px"></div>
  <div class="sk" style="left:2444px;top:1401px;width:153px;height:26px"></div>
  <div class="sk" style="left:2444px;top:1433px;width:336px;height:26px"></div>
  <!-- row6 -->
  <div class="sk" style="left:2444px;top:1494px;width:336px;height:34px"></div>
  <div class="sk" style="left:2444px;top:1533px;width:308px;height:32px"></div>
  <div class="sk" style="left:2444px;top:1572px;width:153px;height:27px"></div>
</div>
<div id="mediabtn">
  <svg class="abs" style="left:0;top:0" width="114" height="114" viewBox="3116 399 114 114">
    <path d="M3146 444.400 H3180 M3146 455.600 H3180 M3146 466.300 H3168.400" stroke="#050505" stroke-width="5.400" fill="none"/>
    <path d="M3185.700 441.800 H3199.600 V447.600 H3191.600 V472.500 H3185.700 Z" fill="#050505"/>
    <circle cx="3183" cy="472.500" r="8.600" fill="#050505"/>
  </svg>
</div>
<div id="popshadow"></div>
<div id="popup">
  <div id="pdark"></div>
  <svg class="abs" style="left:432px;top:0" width="369" height="265" viewBox="345 72 1291 933" preserveAspectRatio="xMidYMid slice"><use href="#concert"/></svg>
  <div class="abs" style="left:428px;top:0;width:30px;height:265px;background:linear-gradient(90deg,#05070f 0%,#05070f 20%,rgba(5,7,15,0) 100%)"></div>
  <div class="bar" style="top:39px;width:57px;height:16px"></div>
  <div class="bar" style="top:88px;width:257px;height:16px"></div>
  <div class="bar" style="top:115.500px;width:133.500px;height:17px"></div>
  <svg class="abs" style="left:0;top:160px" width="420" height="90" viewBox="0 160 420 90">
    <g fill="#d0d4fc" stroke="#d0d4fc" stroke-width="3" stroke-linejoin="round">
      <path d="M64.500 193.500 L50.500 203.500 L64.500 213.500 Z"/>
      <path d="M85.500 193.500 L71.500 203.500 L85.500 213.500 Z"/>
      <path d="M139 191 L160.500 203.500 L139 216 Z"/>
      <path d="M208.500 193.500 L222.500 203.500 L208.500 213.500 Z"/>
      <path d="M229.500 193.500 L243.500 203.500 L229.500 213.500 Z"/>
    </g>
    <path d="M278 180 V228" stroke="#d0d4fc" stroke-width="3.600" stroke-linecap="round" fill="none"/>
    <path d="M330 185 H351 V203" stroke="#d0d4fc" stroke-width="4" fill="none"/>
    <path d="M309.500 203 V216.500 H330" stroke="#d0d4fc" stroke-width="4" fill="none"/>
    <rect x="334" y="206.500" width="19" height="12" fill="#d0d4fc"/>
    <path d="M308.500 183 L321.500 196 M321.500 185.500 V196 H311" stroke="#d0d4fc" stroke-width="3.600" fill="none"/>
  </svg>
  <!-- captions row -->
  <svg class="abs" style="left:40px;top:290px" width="60" height="55" viewBox="40 290 60 55">
    <rect x="49.200" y="301.800" width="40.600" height="31" rx="2.500" stroke="#0b0b0c" stroke-width="4.400" fill="none"/>
    <path d="M56.500 315 H59.500 M62.500 315 H82.500 M56.500 323 H76.500 M79.500 323 H82.500" stroke="#0b0b0c" stroke-width="3.200" fill="none"/>
  </svg>
  <div class="ptext" style="left:122px;top:287px">自動字幕起こし</div>
  <svg class="abs" style="left:700px;top:296px" width="64" height="42" viewBox="700 296 64 42">
    <rect x="709.300" y="306.100" width="44.400" height="22.400" rx="11.200" stroke="#050505" stroke-width="4.600" fill="none"/>
    <circle cx="720.500" cy="317.300" r="6.800" fill="#050505"/>
  </svg>
  <div id="pdiv"></div>
  <svg class="abs" style="left:40px;top:392px" width="60" height="56" viewBox="-30 -28 60 56">
    <g transform="translate(0 0.5)"><path d="M-5.42 -13.98 L-5.10 -19.96 L5.10 -19.96 L5.42 -13.98 L9.40 -11.69 L14.74 -14.39 L19.83 -5.57 L14.82 -2.29 L14.82 2.29 L19.83 5.57 L14.74 14.39 L9.40 11.69 L5.42 13.98 L5.10 19.96 L-5.10 19.96 L-5.42 13.98 L-9.40 11.69 L-14.74 14.39 L-19.83 5.57 L-14.82 2.29 L-14.82 -2.29 L-19.83 -5.57 L-14.74 -14.39 L-9.40 -11.69 Z" stroke="#050505" stroke-width="4.4" fill="none" stroke-linejoin="round"/><circle cx="0" cy="0" r="6.6" fill="#050505"/></g>
  </svg>
  <div class="ptext" style="left:123px;top:390px">字幕設定</div>
  <svg class="abs" style="left:720px;top:394px" width="54" height="54" viewBox="720 394 54 54">
    <path d="M742 402.200 H730.200 A2 2 0 0 0 728.200 404.200 V436.800 A2 2 0 0 0 730.200 438.800 H762.800 A2 2 0 0 0 764.800 436.800 V425" stroke="#050505" stroke-width="4" fill="none"/>
    <path d="M750 402.200 H764.800 V417 M764.300 402.700 L741.500 425.500" stroke="#050505" stroke-width="3.800" fill="none"/>
  </svg>
</div>
</body>
</html>
